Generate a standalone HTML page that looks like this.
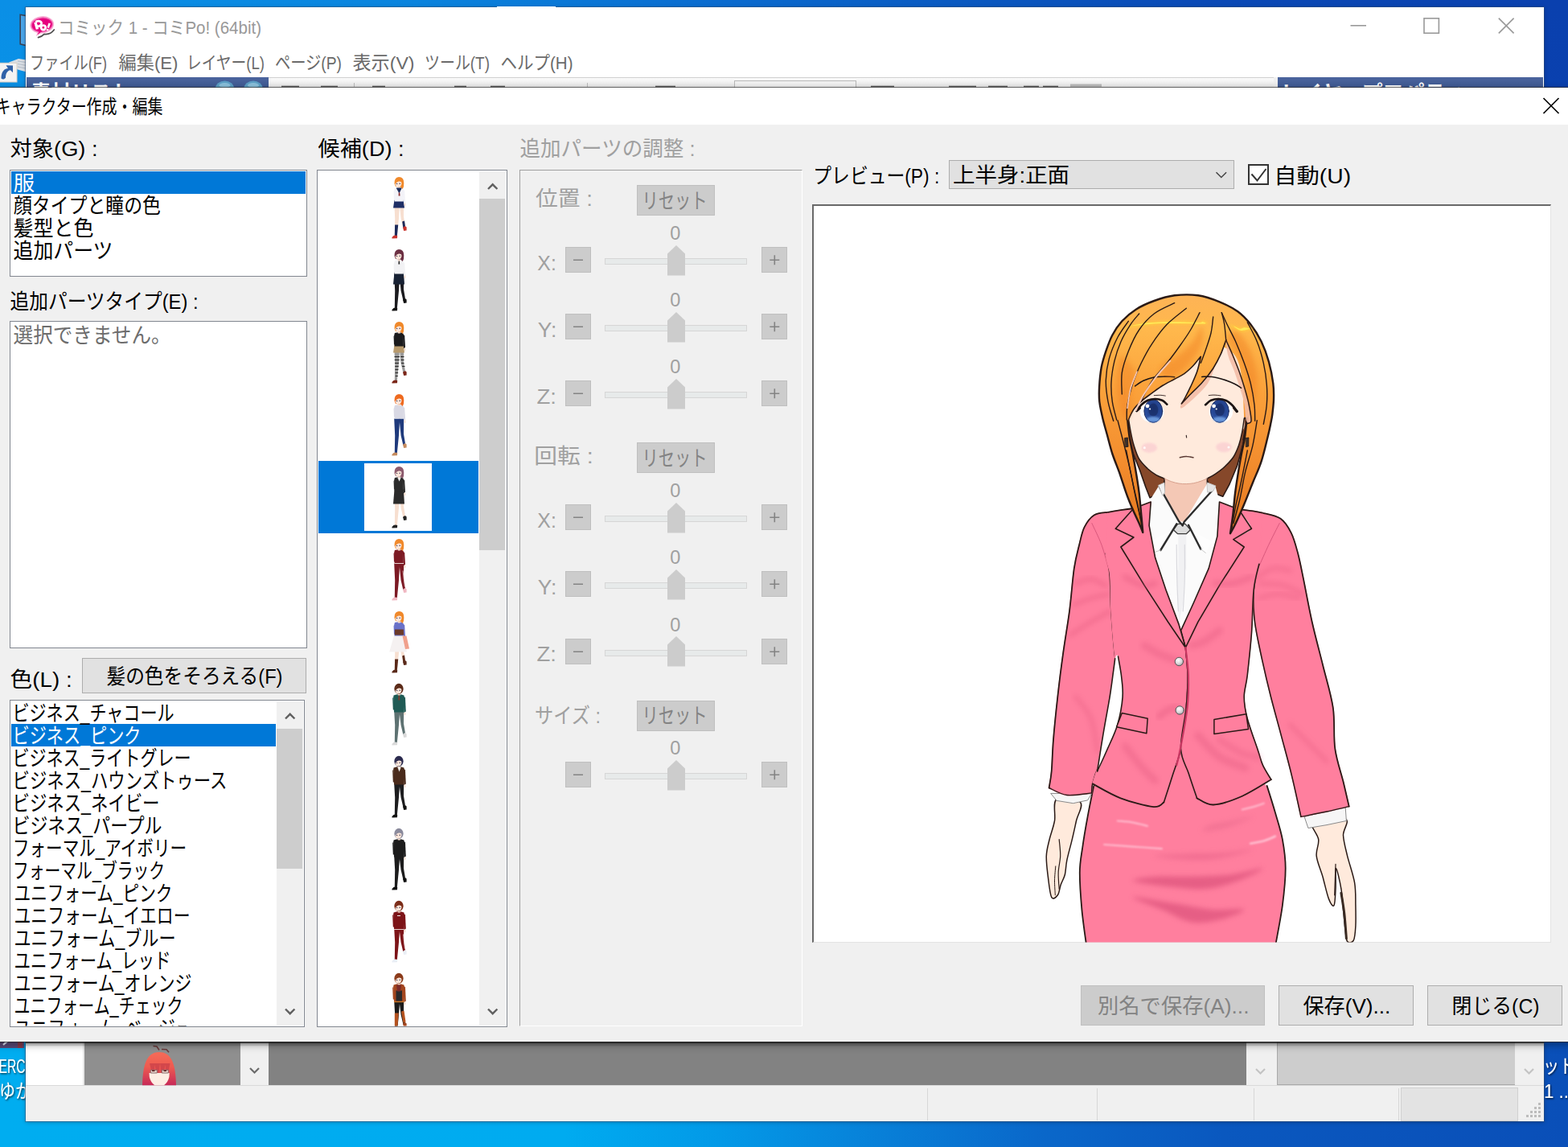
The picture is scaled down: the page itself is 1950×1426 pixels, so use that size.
<!DOCTYPE html>
<html lang="ja">
<head>
<meta charset="utf-8">
<title>コミック 1 - コミPo! (64bit)</title>
<style>
html,body{margin:0;padding:0}
body{width:1950px;height:1426px;overflow:hidden;position:relative;font-family:"Liberation Sans",sans-serif;background:#0a55bd}
.abs{position:absolute}
.tx{left:0;top:0;pointer-events:none}
#desk{left:0;top:0;width:1950px;height:1426px;
 background:
 linear-gradient(90deg,rgba(0,0,0,0) 0,rgba(0,0,0,0) 100%),
 linear-gradient(90deg,#0a92e8 0,#0a84de 26%,#0a6bcf 46%,#0a58c0 62%,#0a49b6 77%,#0a40ae 100%)}
#deskb{left:0;top:1290px;width:1950px;height:136px;background:linear-gradient(90deg,#00adf0 0,#00abf0 36%,#0399e7 46%,#0880d8 56%,#0a68ca 66%,#0a58bf 78%,#0a4fb8 100%)}
#deskl{left:0;top:0;width:34px;height:1426px;background:linear-gradient(180deg,#0a8fe6 0,#0596e8 30%,#00a4ee 70%,#00adf0 100%)}
#deskr{left:1918px;top:0;width:32px;height:1426px;background:linear-gradient(180deg,#0a40ae 0,#0a44b2 50%,#0a4cb6 90%,#0a50b8 100%)}
#main{left:32px;top:9px;width:1888px;height:1385px;background:#fff;box-shadow:0 0 0 1px rgba(50,80,120,.5),0 1px 5px rgba(0,0,0,.3)}
.bluep{background:linear-gradient(180deg,#4b649d 0,#3c5791 100%)}
#dlg{left:-10px;top:109px;width:1975px;height:1186px;background:#f0f0f0;box-shadow:0 0 0 1px rgba(40,40,40,.65),0 3px 10px rgba(0,0,0,.45)}
#dlgt{left:0;top:0;width:1975px;height:46px;background:#fff}
.lb{background:#fff;border:1px solid #828790;box-sizing:border-box}
.sel{background:#0078d7}
.btn{background:#e1e1e1;border:1px solid #adadad;box-sizing:border-box}
.btnd{background:#ccc;border:1px solid #bfbfbf;box-sizing:border-box}
.sb{position:absolute;width:32px;height:32px;background:#ccc;border:1px solid #bfbfbf;box-sizing:border-box}
.trk{position:absolute;left:752px;width:177px;height:8px;background:#e7eaea;border:1px solid #d6d6d6;box-sizing:border-box}
.sbar{background:#f0f0f0}
.thumb{background:#cdcdcd}
svg text{font-family:"Liberation Sans","Noto Sans CJK JP",sans-serif;white-space:pre}
</style>
</head>
<body>
<svg width="0" height="0" style="position:absolute"><defs><filter id="ds" x="-20%" y="-20%" width="150%" height="150%"><feDropShadow dx="1" dy="1.2" stdDeviation=".8" flood-color="#000" flood-opacity=".75"/></filter></defs></svg>
<!-- ===== desktop ===== -->
<div id="desk" class="abs"></div>
<div id="deskl" class="abs"></div>
<div id="deskr" class="abs"></div>
<div id="deskb" class="abs"></div>
<!-- desktop icons peeking at left -->
<svg class="abs" style="left:0;top:0" width="40" height="120" viewBox="0 0 40 120">
 <path d="M25.2 18.200l8 1.500v37l-8-1.800z" fill="#4aa5ea" stroke="#3a4254" stroke-width="1.600"/>
 <path d="M11 77.500l12-4.500 10 1.500v15l-11-3z" fill="#d9dee4"/>
 <path d="M22 76l10 1.500M22 79.500l10 1.800M22 83l10 2" stroke="#b4bcc6" stroke-width="1" fill="none"/>
 <rect x="-1" y="78.300" width="22" height="23.700" fill="#f3f3f3" stroke="#d9cfc4" stroke-width="1"/>
 <path d="M1.500 97.500c0-9 4.500-12.500 8.500-12.500l-2.500-3.800 8.500.2v8.800l-3-3c-3.500.5-6 3.500-6 9.500-2.500 2.500-4 2-5.500.8z" fill="#2f61a8"/>
</svg>
<svg class="abs" style="left:0;top:1295px" width="34" height="9" viewBox="0 12 34 9"><path d="M0 0h30v20H0z" fill="#5b4a78"/><path d="M2 2l9 8-7 6" stroke="#e8eefc" stroke-width="2.200" fill="none"/><path d="M22 0h6v20h-6z" fill="#8a3a4a"/></svg>

<svg class="abs tx" width="1950" height="1426" viewBox="0 0 1950 1426"><g fill="#fff" filter="url(#ds)"><text x="-1.5" y="1333.5" font-size="23" textLength="33" lengthAdjust="spacingAndGlyphs">ERC</text><text x="-1" y="1365" font-size="24" textLength="40" lengthAdjust="spacingAndGlyphs">ゆか</text><text x="1919" y="1333.500" font-size="24" textLength="40" lengthAdjust="spacingAndGlyphs">ット</text><text x="1920" y="1365" font-size="23" textLength="37" lengthAdjust="spacingAndGlyphs">1 ...</text></g></svg>
<!-- ===== main window ===== -->
<div id="main" class="abs">
 <!-- strip visible above dialog : y 96..108 (window coords: -9) -->
 <div class="abs bluep" style="left:1px;top:87px;width:301px;height:16px"></div>
 <div class="abs" style="left:302px;top:87px;width:1250px;height:16px;background:linear-gradient(180deg,#fafafa,#e4e4e4);border-top:1px solid #d0d0d0;border-right:1px solid #b8b8b8"></div>
 <div class="abs" style="left:1552px;top:87px;width:6px;height:16px;background:#f0f0f0"></div>
 <div class="abs bluep" style="left:1557px;top:87px;width:330px;height:16px"></div>
 <div class="abs" style="left:881px;top:91px;width:150px;height:12px;background:#f2f2f2;border:1px solid #b9b9b9;border-bottom:0"></div>
 <!-- below dialog : y 1295..1349 -->
 <div class="abs" style="left:0;top:1286px;width:71px;height:54px;background:#fff"></div>
 <div class="abs" style="left:71px;top:1286px;width:2px;height:54px;background:#e8e8e8"></div>
 <div class="abs" style="left:73px;top:1286px;width:194px;height:54px;background:#8f8f8f"></div>
 <div class="abs sbar" style="left:267px;top:1286px;width:35px;height:54px"></div>
 <div class="abs" style="left:302px;top:1286px;width:1216px;height:54px;background:#828282"></div>
 <div class="abs sbar" style="left:1518px;top:1286px;width:38px;height:54px"></div>
 <div class="abs" style="left:1556px;top:1286px;width:297px;height:54px;background:#cdcdcd;border-left:1px solid #a9a9a9;border-bottom:1px solid #a9a9a9;box-sizing:border-box"></div>
 <div class="abs sbar" style="left:1852px;top:1286px;width:36px;height:54px"></div>
 <!-- status bar -->
 <div class="abs" style="left:0;top:1340px;width:1888px;height:45px;background:#f0f0f0;border-top:1px solid #d9d9d9;box-sizing:border-box"></div>
 <div class="abs" style="left:1121px;top:1344px;width:1px;height:40px;background:#d7d7d7"></div>
 <div class="abs" style="left:1332px;top:1344px;width:1px;height:40px;background:#d7d7d7"></div>
 <div class="abs" style="left:1527px;top:1344px;width:1px;height:40px;background:#d7d7d7"></div>
 <div class="abs" style="left:1707px;top:1344px;width:1px;height:40px;background:#d7d7d7"></div>
 <div class="abs" style="left:1710px;top:1343px;width:146px;height:42px;background:#e3e3e3;border:1px solid #d0d0d0;box-sizing:border-box"></div>
</div>
<!-- main window chrome icons -->
<svg class="abs" style="left:0;top:0" width="1950" height="110" viewBox="0 0 1950 110">
 <g stroke="#999" stroke-width="1.6" fill="none">
  <path d="M1679.5 31.8h19.5"/><rect x="1771" y="22.8" width="18.4" height="18.4"/><path d="M1863.8 22.6l18.8 18.8M1882.6 22.6l-18.8 18.8"/>
 </g>
 <rect x="618" y="8" width="73" height="2" fill="#fff"/>
 <!-- app icon -->
 <g>
  <path d="M47.500 46.600Q52.500 45.300 55 42.400Q62.500 43.400 67.300 37" stroke="#4d4d4d" stroke-width="1.700" fill="none" stroke-linecap="round"/>
  <path d="M48 37l-3.200 8 8.500-5.500z" fill="#f7a8d2"/>
  <ellipse cx="52.200" cy="30.800" rx="15" ry="10.700" fill="#f9b3d8" transform="rotate(-6 52.200 30.800)"/>
  <ellipse cx="52.200" cy="30.800" rx="13.700" ry="9.400" fill="#ef5fae" transform="rotate(-6 52.200 30.800)"/>
  <ellipse cx="52.200" cy="30.900" rx="12.500" ry="8" fill="#e6007e" transform="rotate(-6 52.200 30.900)"/>
  <path d="M49.300 37.500l-2.800 5.800 6-4.600z" fill="#e6007e"/>
  <g fill="none" stroke="#fff" stroke-linejoin="round">
   <path d="M43.900 27.600L46.400 36.400" stroke-width="3.400"/>
   <path d="M44.300 27.400C47.500 25.300 52 26 51.500 29.500C51 32.300 48 32.900 45.600 32.700" stroke-width="2.800"/>
   <circle cx="53.900" cy="34.300" r="2.800" stroke-width="2.700"/>
   <path d="M61.700 28.800L59.700 34.700" stroke-width="2.600"/>
  </g>
  <circle cx="59" cy="37.100" r="1.400" fill="#fff"/>
 </g>
 <!-- toolbar icon tops -->
 <rect x="350" y="106.700" width="22" height="1.500" fill="#2a2a2a" opacity=".75"/><rect x="399" y="106.700" width="21" height="1.500" fill="#2a2a2a" opacity=".75"/><rect x="463" y="106.700" width="16" height="1.500" fill="#2a2a2a" opacity=".75"/><rect x="565" y="106.700" width="15" height="1.500" fill="#2a2a2a" opacity=".75"/><rect x="610" y="106.700" width="18" height="1.500" fill="#2a2a2a" opacity=".75"/><rect x="815" y="106.700" width="25" height="1.500" fill="#2a2a2a" opacity=".75"/><rect x="1083" y="106.700" width="29" height="1.500" fill="#2a2a2a" opacity=".75"/><rect x="1180" y="106.700" width="34" height="1.500" fill="#2a2a2a" opacity=".75"/><rect x="1229" y="106.700" width="24" height="1.500" fill="#2a2a2a" opacity=".75"/><rect x="1273" y="106.700" width="19" height="1.500" fill="#2a2a2a" opacity=".75"/><rect x="1297" y="106.700" width="19" height="1.500" fill="#2a2a2a" opacity=".75"/><rect x="1331" y="104.500" width="39" height="3.500" fill="#bbb"/><rect x="440" y="103" width="1" height="5" fill="#bbb"/><rect x="730" y="103" width="1" height="5" fill="#bbb"/>
 <!-- scroll arrows on blue panel -->
 <g fill="#5c9fc6"><ellipse cx="279.500" cy="109.500" rx="11.500" ry="9"/><ellipse cx="315" cy="109.500" rx="11.500" ry="9"/></g><g fill="#9fd0e6" opacity=".7"><ellipse cx="279.500" cy="106" rx="7" ry="3"/><ellipse cx="315" cy="106" rx="7" ry="3"/></g>
</svg>
<!-- little chevrons under dialog + thumbnail -->
<svg class="abs" style="left:0;top:1290px" width="1950" height="110" viewBox="0 1290 1950 110">
 <g stroke="#6b6b6b" stroke-width="2.2" fill="none"><path d="M311 1328l5.5 5.5 5.5-5.5"/></g>
 <g stroke="#c3c3c3" stroke-width="2.2" fill="none"><path d="M1562 1329l5.5 5.5 5.5-5.5M1896 1329l5.5 5.5 5.5-5.5"/></g>
 <!-- red haired avatar -->
 <defs><linearGradient id="av" x1="0" y1="0" x2="0" y2="1"><stop offset="0" stop-color="#f56c58"/><stop offset=".45" stop-color="#ee5a50"/><stop offset="1" stop-color="#c72a58"/></linearGradient></defs>
 <g>
  <path d="M190.500 1300.500l4.500 .5 3 4.500M201 1304.500l6 .3 3 3.500" stroke="#6a3a3a" stroke-width="1.600" fill="none"/>
  <path d="M177 1349.300C177.500 1327 181 1308 198 1308S218.500 1327 219 1349.300Z" fill="url(#av)"/>
  <path d="M185.500 1334h25.200l-.3 5q-1.500 6.500-6.500 10.300h-11.600q-5-3.800-6.500-10.300z" fill="#fdeee4"/>
  <path d="M186 1322l3 12h2.500l1-10 2 10h3l1.500-12 1.500 12h3l2-10 1 10h2.500l2.500-12z" fill="#c9404a" opacity=".75"/>
  <path d="M187.300 1330.300h8v3.700h-8zM201.300 1330.300h8v3.700h-8z" fill="#e6d4cc" stroke="#8a6a6a" stroke-width="1"/>
  <path d="M189 1331.300h3.500M203.500 1331.300h3.500" stroke="#5a1a1a" stroke-width="1.600"/>
 </g>
 <!-- dialog shadow on panels -->
 <rect x="32" y="1295" width="1888" height="2.200" fill="#222" opacity=".75"/><rect x="32" y="1297.200" width="1888" height="3" fill="#000" opacity=".12"/>
 <!-- size grip -->
 <g fill="#bdbdbd"><rect x="1908" y="1376" width="3" height="3"/><rect x="1913" y="1376" width="3" height="3"/><rect x="1913" y="1371" width="3" height="3"/><rect x="1903" y="1381" width="3" height="3"/><rect x="1908" y="1381" width="3" height="3"/><rect x="1913" y="1381" width="3" height="3"/><rect x="1908" y="1386" width="3" height="3"/><rect x="1913" y="1386" width="3" height="3"/><rect x="1903" y="1386" width="3" height="3"/><rect x="1898" y="1386" width="3" height="3"/></g>
</svg>
<svg class="abs tx" width="1950" height="1426" viewBox="0 0 1950 1426"><text x="72" y="42" font-size="22" fill="#999" textLength="253" lengthAdjust="spacingAndGlyphs">コミック 1 - コミPo! (64bit)</text><g font-size="22.5" fill="#6a6a6a"><text x="37" y="85.500" textLength="96" lengthAdjust="spacingAndGlyphs">ファイル(F)</text><text x="147.500" y="85.500" textLength="74" lengthAdjust="spacingAndGlyphs">編集(E)</text><text x="232" y="85.500" textLength="97" lengthAdjust="spacingAndGlyphs">レイヤー(L)</text><text x="342" y="85.500" textLength="83" lengthAdjust="spacingAndGlyphs">ページ(P)</text><text x="438.500" y="85.500" textLength="77" lengthAdjust="spacingAndGlyphs">表示(V)</text><text x="528" y="85.500" textLength="81" lengthAdjust="spacingAndGlyphs">ツール(T)</text><text x="622.500" y="85.500" textLength="90" lengthAdjust="spacingAndGlyphs">ヘルプ(H)</text></g><g font-size="26" font-weight="bold" fill="#fff"><text x="38.500" y="124.500" textLength="124" lengthAdjust="spacingAndGlyphs">素材リスト</text><text x="1592.500" y="124.500" textLength="229" lengthAdjust="spacingAndGlyphs">レイヤープロパティ</text></g></svg>

<!-- ===== dialog ===== -->
<div id="dlg" class="abs"><div id="dlgt" class="abs"></div></div>
<!-- list 1 -->
<div class="abs lb" style="left:12px;top:211px;width:370px;height:133px"></div>
<div class="abs sel" style="left:14px;top:213px;width:366px;height:28px"></div>
<!-- list 2 -->
<div class="abs lb" style="left:12px;top:399px;width:370px;height:407px"></div>
<!-- colour button -->
<div class="abs btn" style="left:102px;top:818px;width:279px;height:44px"></div>
<!-- list 3 -->
<div class="abs lb" style="left:12px;top:870px;width:367px;height:407px"></div>
<div class="abs sel" style="left:14px;top:900px;width:329px;height:28px"></div>
<div class="abs sbar" style="left:344px;top:872px;width:33px;height:403px"></div>
<div class="abs thumb" style="left:344px;top:906px;width:32px;height:174px"></div>
<!-- candidate list -->
<div class="abs lb" style="left:394px;top:211px;width:237px;height:1066px"></div>
<div class="abs sel" style="left:396px;top:573px;width:199px;height:90px"></div>
<div class="abs" style="left:453px;top:576px;width:84px;height:84px;background:#fff"></div>
<div class="abs sbar" style="left:596px;top:213px;width:33px;height:1062px"></div>
<div class="abs thumb" style="left:596px;top:247px;width:32px;height:437px"></div>
<!-- adjust group box -->
<div class="abs" style="left:646px;top:211px;width:352px;height:1065px;border-left:1px solid #a0a0a0;border-top:1px solid #a0a0a0;border-right:1px solid #fff;border-bottom:1px solid #fff;box-sizing:border-box"></div>
<div class="abs btnd" style="left:792px;top:230px;width:97px;height:38px"></div>
<div class="abs btnd" style="left:792px;top:550px;width:97px;height:38px"></div>
<div class="abs btnd" style="left:792px;top:871px;width:97px;height:38px"></div>
<div class="sb" style="left:703px;top:307.2px"></div><div class="sb" style="left:947px;top:307.2px"></div>
<div class="trk" style="top:321.0px"></div>
<svg class="abs" style="left:829px;top:303.7px" width="24" height="40"><path d="M1 38.5V11.5L12 1l11 10.5v27z" fill="#ccc"/></svg>
<svg class="abs" style="left:703px;top:307.2px" width="280" height="32" stroke="#838383" stroke-width="1.6" fill="none"><path d="M10 16.3h12M254.3 16.3h12M260.3 10.3v12"/></svg><div class="sb" style="left:703px;top:390.4px"></div><div class="sb" style="left:947px;top:390.4px"></div>
<div class="trk" style="top:404.2px"></div>
<svg class="abs" style="left:829px;top:386.9px" width="24" height="40"><path d="M1 38.5V11.5L12 1l11 10.5v27z" fill="#ccc"/></svg>
<svg class="abs" style="left:703px;top:390.4px" width="280" height="32" stroke="#838383" stroke-width="1.6" fill="none"><path d="M10 16.3h12M254.3 16.3h12M260.3 10.3v12"/></svg><div class="sb" style="left:703px;top:473.4px"></div><div class="sb" style="left:947px;top:473.4px"></div>
<div class="trk" style="top:487.2px"></div>
<svg class="abs" style="left:829px;top:469.9px" width="24" height="40"><path d="M1 38.5V11.5L12 1l11 10.5v27z" fill="#ccc"/></svg>
<svg class="abs" style="left:703px;top:473.4px" width="280" height="32" stroke="#838383" stroke-width="1.6" fill="none"><path d="M10 16.3h12M254.3 16.3h12M260.3 10.3v12"/></svg><div class="sb" style="left:703px;top:627.2px"></div><div class="sb" style="left:947px;top:627.2px"></div>
<div class="trk" style="top:641.0px"></div>
<svg class="abs" style="left:829px;top:623.7px" width="24" height="40"><path d="M1 38.5V11.5L12 1l11 10.5v27z" fill="#ccc"/></svg>
<svg class="abs" style="left:703px;top:627.2px" width="280" height="32" stroke="#838383" stroke-width="1.6" fill="none"><path d="M10 16.3h12M254.3 16.3h12M260.3 10.3v12"/></svg><div class="sb" style="left:703px;top:710.4px"></div><div class="sb" style="left:947px;top:710.4px"></div>
<div class="trk" style="top:724.2px"></div>
<svg class="abs" style="left:829px;top:706.9px" width="24" height="40"><path d="M1 38.5V11.5L12 1l11 10.5v27z" fill="#ccc"/></svg>
<svg class="abs" style="left:703px;top:710.4px" width="280" height="32" stroke="#838383" stroke-width="1.6" fill="none"><path d="M10 16.3h12M254.3 16.3h12M260.3 10.3v12"/></svg><div class="sb" style="left:703px;top:793.8px"></div><div class="sb" style="left:947px;top:793.8px"></div>
<div class="trk" style="top:807.6px"></div>
<svg class="abs" style="left:829px;top:790.3px" width="24" height="40"><path d="M1 38.5V11.5L12 1l11 10.5v27z" fill="#ccc"/></svg>
<svg class="abs" style="left:703px;top:793.8px" width="280" height="32" stroke="#838383" stroke-width="1.6" fill="none"><path d="M10 16.3h12M254.3 16.3h12M260.3 10.3v12"/></svg><div class="sb" style="left:703px;top:947.2px"></div><div class="sb" style="left:947px;top:947.2px"></div>
<div class="trk" style="top:961.0px"></div>
<svg class="abs" style="left:829px;top:943.7px" width="24" height="40"><path d="M1 38.5V11.5L12 1l11 10.5v27z" fill="#ccc"/></svg>
<svg class="abs" style="left:703px;top:947.2px" width="280" height="32" stroke="#838383" stroke-width="1.6" fill="none"><path d="M10 16.3h12M254.3 16.3h12M260.3 10.3v12"/></svg>
<!-- preview header -->
<div class="abs btn" style="left:1180px;top:199px;width:355px;height:36px"></div>
<div class="abs" style="left:1552px;top:204px;width:26px;height:26px;background:#fff;border:2px solid #333;box-sizing:border-box"></div>
<!-- preview pane -->
<div class="abs" style="left:1010px;top:254px;width:1919px;height:1px"></div>
<div class="abs" style="left:1010px;top:254px;width:919px;height:918px;background:#fff;border-left:2px solid #696969;border-top:2px solid #696969;border-right:1px solid #e3e3e3;border-bottom:1px solid #e3e3e3;box-sizing:border-box"></div>
<!-- bottom buttons -->
<div class="abs btnd" style="left:1344px;top:1225px;width:229px;height:50px"></div>
<div class="abs btn" style="left:1590px;top:1225px;width:168px;height:50px"></div>
<div class="abs btn" style="left:1775px;top:1225px;width:168px;height:50px"></div>
<!-- dialog icons -->
<svg class="abs tx" width="1950" height="1426" viewBox="0 0 1950 1426">
 <path d="M1919.5 122l19 19M1938.5 122l-19 19" stroke="#000" stroke-width="1.7" fill="none"/>
 <path d="M1512.5 214.2l6.3 6.3 6.3-6.3" stroke="#444" stroke-width="1.5" fill="none"/>
 <path d="M1556.5 216.5l7 8 11-14.5" stroke="#333" stroke-width="2" fill="none"/>
 <g stroke="#606060" stroke-width="2.4" fill="none">
  <path d="M355 893.5l5.7-5.7 5.7 5.700M355 1254.500l5.7 5.700 5.700-5.700"/>
  <path d="M607 235l5.700-5.700 5.700 5.700M607 1254.500l5.700 5.700 5.700-5.700"/>
 </g>
</svg>
<svg class="abs tx" width="1950" height="1426" viewBox="0 0 1950 1426"><defs><filter id="tb"><feGaussianBlur stdDeviation=".7"/></filter><clipPath id="cth"><rect x="396" y="213" width="200" height="1062.5"/></clipPath></defs><g clip-path="url(#cth)"><g transform="translate(496.0,219.5)"><path d="M0.500 31 L6.200 31 L6 50 L8 62 L5.400 64 L2.600 52Z" fill="#f7dfd0"/><path d="M-5.800 31 L1.200 31 L0 52 L-2.200 74 L-5.200 74 L-4.800 52Z" fill="#f7dfd0"/><path d="M-4.900 60L-0.800 60L-2.200 74L-5.200 74Z" fill="#1c2a5a"/><path d="M4.200 56L7 55L8 62L5.400 64Z" fill="#1c2a5a"/><path d="M-8.500 75.500Q-6 72 -1.800 73.500L-2 76.800L-8.500 77Z" fill="#c9342e"/><path d="M5 63.500Q7.500 60.500 9.600 63L9.600 67L6.200 67.500Z" fill="#c9342e"/><path d="M-5.500 29L5.800 29L7 39L-7.0 39Z" fill="#1f2f66"/><path d="M-5.200 14.500Q0 12.800 5.200 14.500L5.900 31L-5.400 31Z" fill="#f3f3f8"/><path d="M4.800 15L7.200 18L8 32L6.200 34L5.400 26Z" fill="#f3f3f8"/><path d="M-5.200 15L-6.400 19L-6 29L-4.800 29Z" fill="#f3f3f8"/><path d="M6.300 34L8.100 32.3L8.500 36L7 36.8Z" fill="#f7dfd0"/><path d="M-1.200 11.500L1.800 11.500L1.800 15L-1.200 15Z" fill="#f7dfd0"/><path d="M-5.400 9Q-6 1 0 0.400Q6.500 0.600 6.300 8Q6.500 13 4.800 15.500L2 13L-4 12.500Z" fill="#f0892b"/><ellipse cx="-0.600" cy="8.400" rx="4" ry="4.700" fill="#fbe6da"/><path d="M-5.200 7.500Q-3.500 2.500 1 3Q5 3.600 5.200 8.500Q3 5.500 0 6Q-3.200 6.600 -4.400 10Z" fill="#f0892b"/><circle cx="1.200" cy="8.800" r="0.750" fill="#3a3550"/><circle cx="-2.400" cy="9" r="0.700" fill="#3a3550"/><path d="M-3.400 14L3.800 14L0.500 21Z" fill="#1d2d5c"/><path d="M-.2 20l1.400 0l.4 4l-2 0z" fill="#8a2a2a"/></g><g transform="translate(496.0,309.5)"><path d="M0.500 31 L6.200 31 L6 50 L8 62 L5.400 64 L2.600 52Z" fill="#1b1b1f"/><path d="M-5.800 31 L1.200 31 L0 52 L-2.200 74 L-5.200 74 L-4.800 52Z" fill="#1b1b1f"/><path d="M-8.500 75.500Q-6 72 -1.800 73.500L-2 76.800L-8.500 77Z" fill="#111"/><path d="M5 63.500Q7.500 60.500 9.600 63L9.600 67L6.200 67.500Z" fill="#111"/><path d="M-5.500 29L5.800 29L7 44L-7.0 44Z" fill="#182234"/><path d="M-5.200 14.500Q0 12.800 5.200 14.500L5.900 31L-5.400 31Z" fill="#f2f2f4"/><path d="M4.800 15L7.200 18L8 32L6.200 34L5.400 26Z" fill="#f2f2f4"/><path d="M-5.200 15L-6.400 19L-6 29L-4.800 29Z" fill="#f2f2f4"/><path d="M6.300 34L8.100 32.3L8.500 36L7 36.8Z" fill="#f7dfd0"/><path d="M-1.200 11.500L1.800 11.500L1.800 15L-1.200 15Z" fill="#f7dfd0"/><path d="M-5.400 9Q-6 1 0 0.400Q6.500 0.600 6.300 8Q6.500 13 4.800 15.500L2 13L-4 12.500Z" fill="#6b2f42"/><ellipse cx="-0.600" cy="8.400" rx="4" ry="4.700" fill="#fbe6da"/><path d="M-5.200 7.500Q-3.500 2.500 1 3Q5 3.600 5.200 8.500Q3 5.500 0 6Q-3.200 6.600 -4.400 10Z" fill="#6b2f42"/><circle cx="1.200" cy="8.800" r="0.750" fill="#3a3550"/><circle cx="-2.400" cy="9" r="0.700" fill="#3a3550"/><path d="M-.3 15l1.200 0l.3 4l-1.800 0z" fill="#222"/></g><g transform="translate(496.0,399.5)"><path d="M0.500 31 L6.200 31 L6 50 L8 62 L5.400 64 L2.600 52Z" fill="#9a9a9a"/><path d="M-5.800 31 L1.200 31 L0 52 L-2.200 74 L-5.200 74 L-4.800 52Z" fill="#9a9a9a"/><path d="M-8.500 75.500Q-6 72 -1.800 73.500L-2 76.800L-8.500 77Z" fill="#7b2618"/><path d="M5 63.500Q7.500 60.500 9.600 63L9.600 67L6.200 67.500Z" fill="#7b2618"/><path d="M-5.500 29L5.800 29L7 39L-7.0 39Z" fill="#b89a6c"/><path d="M-5.200 14.500Q0 12.800 5.200 14.500L5.900 31L-5.400 31Z" fill="#1b1b1d"/><path d="M4.800 15L7.200 18L8 32L6.200 34L5.400 26Z" fill="#1b1b1d"/><path d="M-5.200 15L-6.400 19L-6 29L-4.800 29Z" fill="#1b1b1d"/><path d="M6.300 34L8.100 32.3L8.500 36L7 36.8Z" fill="#f7dfd0"/><path d="M-1.200 11.500L1.800 11.500L1.800 15L-1.200 15Z" fill="#f7dfd0"/><path d="M-5.400 9Q-6 1 0 0.400Q6.500 0.600 6.300 8Q6.500 13 4.800 15.500L2 13L-4 12.500Z" fill="#f0892b"/><ellipse cx="-0.600" cy="8.400" rx="4" ry="4.700" fill="#fbe6da"/><path d="M-5.200 7.500Q-3.500 2.500 1 3Q5 3.600 5.200 8.500Q3 5.500 0 6Q-3.200 6.600 -4.400 10Z" fill="#f0892b"/><circle cx="1.200" cy="8.800" r="0.750" fill="#3a3550"/><circle cx="-2.400" cy="9" r="0.700" fill="#3a3550"/><g stroke="#222" stroke-width="1.100"><path d="M-5.500 44h6.500M-5.300 48h6M-5 52h5M-4.800 56h4.500M-4.600 60h4M-4.400 64h3.500M-4.200 68h3M2 44h4.500M2.500 48h4M3 52h3.500M4 56h3.500"/></g></g><g transform="translate(496.0,489.5)"><path d="M0.500 31 L6.200 31 L6 50 L8 62 L5.400 64 L2.600 52Z" fill="#1f3a7c"/><path d="M-5.800 31 L1.200 31 L0 52 L-2.200 74 L-5.200 74 L-4.800 52Z" fill="#1f3a7c"/><path d="M-8.500 75.500Q-6 72 -1.800 73.500L-2 76.800L-8.500 77Z" fill="#c58b5e"/><path d="M5 63.500Q7.500 60.500 9.600 63L9.600 67L6.200 67.500Z" fill="#c58b5e"/><path d="M-5.200 14.500Q0 12.800 5.200 14.500L5.900 31L-5.400 31Z" fill="#d9d9e4"/><path d="M4.800 15L7.200 18L8 32L6.200 34L5.400 26Z" fill="#d9d9e4"/><path d="M-5.200 15L-6.400 19L-6 29L-4.800 29Z" fill="#d9d9e4"/><path d="M6.300 34L8.100 32.3L8.500 36L7 36.8Z" fill="#f7dfd0"/><path d="M-1.200 11.500L1.800 11.500L1.800 15L-1.200 15Z" fill="#f7dfd0"/><path d="M-5.400 9Q-6 1 0 0.400Q6.500 0.600 6.300 8Q6.500 13 4.800 15.500L2 13L-4 12.500Z" fill="#ee6a1f"/><ellipse cx="-0.600" cy="8.400" rx="4" ry="4.700" fill="#fbe6da"/><path d="M-5.200 7.500Q-3.500 2.500 1 3Q5 3.600 5.200 8.500Q3 5.500 0 6Q-3.200 6.600 -4.400 10Z" fill="#ee6a1f"/><circle cx="1.200" cy="8.800" r="0.750" fill="#3a3550"/><circle cx="-2.400" cy="9" r="0.700" fill="#3a3550"/></g><g transform="translate(496.0,579.5)"><path d="M0.500 31 L6.200 31 L6 50 L8 62 L5.400 64 L2.600 52Z" fill="#f7dfd0"/><path d="M-5.800 31 L1.200 31 L0 52 L-2.200 74 L-5.200 74 L-4.800 52Z" fill="#f7dfd0"/><path d="M-8.500 75.500Q-6 72 -1.800 73.500L-2 76.800L-8.500 77Z" fill="#222"/><path d="M5 63.500Q7.500 60.500 9.600 63L9.600 67L6.200 67.500Z" fill="#222"/><path d="M-5.500 29L5.800 29L7 47L-7.0 47Z" fill="#2b2b2b"/><path d="M-5.200 14.500Q0 12.800 5.200 14.500L5.900 31L-5.400 31Z" fill="#2b2b2b"/><path d="M4.800 15L7.200 18L8 32L6.200 34L5.400 26Z" fill="#2b2b2b"/><path d="M-5.200 15L-6.400 19L-6 29L-4.800 29Z" fill="#2b2b2b"/><path d="M6.300 34L8.100 32.3L8.500 36L7 36.8Z" fill="#f7dfd0"/><path d="M-1.200 11.500L1.800 11.500L1.800 15L-1.200 15Z" fill="#f7dfd0"/><path d="M-5.400 9Q-6 1 0 0.400Q6.500 0.600 6.300 8Q6.500 13 4.800 15.500L2 13L-4 12.500Z" fill="#8d5b6e"/><ellipse cx="-0.600" cy="8.400" rx="4" ry="4.700" fill="#fbe6da"/><path d="M-5.200 7.500Q-3.500 2.500 1 3Q5 3.600 5.200 8.500Q3 5.500 0 6Q-3.200 6.600 -4.400 10Z" fill="#8d5b6e"/><circle cx="1.200" cy="8.800" r="0.750" fill="#3a3550"/><circle cx="-2.400" cy="9" r="0.700" fill="#3a3550"/><path d="M-1.600 14.500L.6 19L2.600 14.500Z" fill="#eee"/></g><g transform="translate(496.0,669.5)"><path d="M0.500 31 L6.200 31 L6 50 L8 62 L5.400 64 L2.600 52Z" fill="#7c1a24"/><path d="M-5.800 31 L1.200 31 L0 52 L-2.200 74 L-5.200 74 L-4.800 52Z" fill="#7c1a24"/><path d="M-8.500 75.500Q-6 72 -1.800 73.500L-2 76.800L-8.500 77Z" fill="#f0b8c2"/><path d="M5 63.500Q7.500 60.500 9.600 63L9.600 67L6.200 67.500Z" fill="#f0b8c2"/><path d="M-5.200 14.500Q0 12.800 5.200 14.500L5.900 31L-5.400 31Z" fill="#7c1a24"/><path d="M4.800 15L7.200 18L8 32L6.200 34L5.400 26Z" fill="#7c1a24"/><path d="M-5.200 15L-6.400 19L-6 29L-4.800 29Z" fill="#7c1a24"/><path d="M6.300 34L8.100 32.3L8.500 36L7 36.8Z" fill="#f7dfd0"/><path d="M-1.200 11.500L1.800 11.500L1.800 15L-1.200 15Z" fill="#f7dfd0"/><path d="M-5.400 9Q-6 1 0 0.400Q6.500 0.600 6.300 8Q6.500 13 4.800 15.500L2 13L-4 12.500Z" fill="#f0892b"/><ellipse cx="-0.600" cy="8.400" rx="4" ry="4.700" fill="#fbe6da"/><path d="M-5.200 7.500Q-3.500 2.500 1 3Q5 3.600 5.200 8.500Q3 5.500 0 6Q-3.200 6.600 -4.400 10Z" fill="#f0892b"/><circle cx="1.200" cy="8.800" r="0.750" fill="#3a3550"/><circle cx="-2.400" cy="9" r="0.700" fill="#3a3550"/><path d="M-5.400 31h11.500" stroke="#e8d0d0" stroke-width="1"/><path d="M5 40l2.500 20" stroke="#e8d0d0" stroke-width=".8"/></g><g transform="translate(496.0,759.5)"><path d="M0.500 31 L6.200 31 L6 50 L8 62 L5.400 64 L2.600 52Z" fill="#f7dfd0"/><path d="M-5.800 31 L1.200 31 L0 52 L-2.200 74 L-5.200 74 L-4.800 52Z" fill="#f7dfd0"/><path d="M-8.500 75.500Q-6 72 -1.800 73.500L-2 76.800L-8.500 77Z" fill="#5a2a1a"/><path d="M5 63.500Q7.500 60.500 9.600 63L9.600 67L6.200 67.500Z" fill="#5a2a1a"/><path d="M-5.500 29L5.800 29L10 51L-11.8 51Z" fill="#f5f1f1"/><path d="M-5.200 14.500Q0 12.800 5.200 14.500L5.900 31L-5.400 31Z" fill="#6a72c9"/><path d="M4.800 15L7.200 18L8 32L6.200 34L5.400 26Z" fill="#6a72c9"/><path d="M-5.200 15L-6.400 19L-6 29L-4.800 29Z" fill="#6a72c9"/><path d="M6.300 34L8.100 32.3L8.500 36L7 36.800Z" fill="#f7dfd0"/><path d="M-1.200 11.500L1.800 11.500L1.800 15L-1.200 15Z" fill="#f7dfd0"/><path d="M-5.400 9Q-6 1 0 0.400Q6.500 0.600 6.300 8Q6.500 13 4.800 15.500L2 13L-4 12.500Z" fill="#f0892b"/><ellipse cx="-0.600" cy="8.400" rx="4" ry="4.700" fill="#fbe6da"/><path d="M-5.200 7.500Q-3.500 2.500 1 3Q5 3.600 5.200 8.500Q3 5.500 0 6Q-3.200 6.600 -4.400 10Z" fill="#f0892b"/><circle cx="1.200" cy="8.800" r="0.750" fill="#3a3550"/><circle cx="-2.400" cy="9" r="0.700" fill="#3a3550"/><path d="M-5 23h10.800l.3 7h-11.300z" fill="#6b3a2a"/><path d="M4.500 31l5 0l3.500 16l-5 .5z" fill="#f0a08c"/><path d="M-4.900 60L-0.800 60L-2.200 74L-5.200 74Z" fill="#5a2a1a"/><path d="M4.200 56L7 55L8 62L5.400 64Z" fill="#5a2a1a"/></g><g transform="translate(496.0,849.5)"><path d="M0.500 35 L6.200 35 L6 50 L8 62 L5.400 64 L2.600 52Z" fill="#5e7272"/><path d="M-5.800 35 L1.200 35 L0 52 L-2.200 74 L-5.200 74 L-4.800 52Z" fill="#5e7272"/><path d="M-8.500 75.500Q-6 72 -1.800 73.500L-2 76.800L-8.500 77Z" fill="#d9d9d9"/><path d="M5 63.500Q7.500 60.500 9.600 63L9.600 67L6.200 67.500Z" fill="#d9d9d9"/><path d="M-6.500 15Q0 12.500 6.500 15L6.600 36L-6 36Z" fill="#1f5b55"/><path d="M5.600 15.500L8 18L8.800 35L6.600 37L5.800 26Z" fill="#1f5b55"/><path d="M-6.400 15.500L-7.800 19L-7.200 33L-5.600 33Z" fill="#1f5b55"/><path d="M6.300 37L8.100 35.3L8.500 39L7 39.800Z" fill="#f7dfd0"/><path d="M-1.200 11.500L1.800 11.500L1.800 15L-1.200 15Z" fill="#f7dfd0"/><ellipse cx="0" cy="6.800" rx="5.600" ry="6.600" fill="#5b2a18"/><ellipse cx="-0.600" cy="8.400" rx="4" ry="4.700" fill="#fbe6da"/><path d="M-5.200 7.500Q-3.500 2.500 1 3Q5 3.600 5.200 8.500Q3 5.500 0 6Q-3.200 6.600 -4.400 10Z" fill="#5b2a18"/><circle cx="1.200" cy="8.800" r="0.750" fill="#3a3550"/><circle cx="-2.400" cy="9" r="0.700" fill="#3a3550"/><path d="M-.300 15l1.200 0l.3 6l-1.800 0z" fill="#8a3a2a"/></g><g transform="translate(496.0,939.5)"><path d="M0.500 35 L6.200 35 L6 50 L8 62 L5.400 64 L2.600 52Z" fill="#1d1d1f"/><path d="M-5.800 35 L1.200 35 L0 52 L-2.200 74 L-5.200 74 L-4.800 52Z" fill="#1d1d1f"/><path d="M-8.500 75.500Q-6 72 -1.800 73.500L-2 76.800L-8.500 77Z" fill="#111"/><path d="M5 63.500Q7.500 60.500 9.600 63L9.600 67L6.200 67.500Z" fill="#111"/><path d="M-6.500 15Q0 12.500 6.500 15L6.600 36L-6 36Z" fill="#4a2b1c"/><path d="M5.600 15.500L8 18L8.800 35L6.600 37L5.800 26Z" fill="#4a2b1c"/><path d="M-6.400 15.500L-7.800 19L-7.200 33L-5.600 33Z" fill="#4a2b1c"/><path d="M6.300 37L8.100 35.3L8.500 39L7 39.800Z" fill="#f7dfd0"/><path d="M-1.200 11.500L1.800 11.500L1.800 15L-1.200 15Z" fill="#f7dfd0"/><ellipse cx="0" cy="6.800" rx="5.600" ry="6.600" fill="#2b2a4e"/><ellipse cx="-0.600" cy="8.400" rx="4" ry="4.700" fill="#fbe6da"/><path d="M-5.200 7.500Q-3.500 2.500 1 3Q5 3.600 5.200 8.500Q3 5.500 0 6Q-3.200 6.600 -4.400 10Z" fill="#2b2a4e"/><circle cx="1.200" cy="8.800" r="0.750" fill="#3a3550"/><circle cx="-2.400" cy="9" r="0.700" fill="#3a3550"/><path d="M-1.600 14.500L.6 20L2.600 14.500Z" fill="#eee"/></g><g filter="url(#tb)"><g transform="translate(496.0,1029.5)"><path d="M0.500 35 L6.200 35 L6 50 L8 62 L5.400 64 L2.600 52Z" fill="#1b1b1c"/><path d="M-5.800 35 L1.200 35 L0 52 L-2.200 74 L-5.200 74 L-4.800 52Z" fill="#1b1b1c"/><path d="M-8.500 75.500Q-6 72 -1.800 73.500L-2 76.800L-8.500 77Z" fill="#111"/><path d="M5 63.500Q7.500 60.500 9.600 63L9.600 67L6.200 67.500Z" fill="#111"/><path d="M-6.500 15Q0 12.500 6.500 15L6.600 36L-6 36Z" fill="#1b1b1c"/><path d="M5.600 15.500L8 18L8.800 35L6.600 37L5.800 26Z" fill="#1b1b1c"/><path d="M-6.400 15.500L-7.800 19L-7.200 33L-5.600 33Z" fill="#1b1b1c"/><path d="M6.300 37L8.100 35.3L8.500 39L7 39.800Z" fill="#f7dfd0"/><path d="M-1.200 11.500L1.800 11.500L1.800 15L-1.200 15Z" fill="#f7dfd0"/><ellipse cx="0" cy="6.800" rx="5.600" ry="6.600" fill="#8a8a9c"/><ellipse cx="-0.600" cy="8.400" rx="4" ry="4.700" fill="#fbe6da"/><path d="M-5.200 7.500Q-3.500 2.500 1 3Q5 3.600 5.200 8.500Q3 5.500 0 6Q-3.200 6.600 -4.400 10Z" fill="#8a8a9c"/><circle cx="1.200" cy="8.800" r="0.750" fill="#3a3550"/><circle cx="-2.400" cy="9" r="0.700" fill="#3a3550"/></g></g><g transform="translate(496.0,1119.5)"><path d="M0.500 35 L6.200 35 L6 50 L8 62 L5.400 64 L2.600 52Z" fill="#7d1418"/><path d="M-5.800 35 L1.200 35 L0 52 L-2.200 74 L-5.200 74 L-4.800 52Z" fill="#7d1418"/><path d="M-8.500 75.500Q-6 72 -1.800 73.500L-2 76.800L-8.500 77Z" fill="#e9eef5"/><path d="M5 63.500Q7.500 60.500 9.600 63L9.600 67L6.200 67.500Z" fill="#e9eef5"/><path d="M-6.500 15Q0 12.500 6.500 15L6.600 36L-6 36Z" fill="#7d1418"/><path d="M5.600 15.500L8 18L8.800 35L6.600 37L5.800 26Z" fill="#7d1418"/><path d="M-6.400 15.500L-7.800 19L-7.200 33L-5.600 33Z" fill="#7d1418"/><path d="M6.300 37L8.100 35.3L8.500 39L7 39.800Z" fill="#f7dfd0"/><path d="M-1.200 11.500L1.800 11.500L1.800 15L-1.200 15Z" fill="#f7dfd0"/><ellipse cx="0" cy="6.800" rx="5.600" ry="6.600" fill="#7b2c18"/><ellipse cx="-0.600" cy="8.400" rx="4" ry="4.700" fill="#fbe6da"/><path d="M-5.200 7.500Q-3.500 2.500 1 3Q5 3.600 5.200 8.500Q3 5.500 0 6Q-3.200 6.600 -4.400 10Z" fill="#7b2c18"/><circle cx="1.200" cy="8.800" r="0.750" fill="#3a3550"/><circle cx="-2.400" cy="9" r="0.700" fill="#3a3550"/><path d="M-6 36h12.500" stroke="#e8d0d0" stroke-width="1"/><path d="M-2 19h4" stroke="#eee" stroke-width="1"/><path d="M5.500 42l2 18" stroke="#e8d0d0" stroke-width=".8"/></g><g transform="translate(496.0,1209.5)"><path d="M0.500 35 L6.200 35 L6 50 L8 62 L5.400 64 L2.600 52Z" fill="#1b1b1b"/><path d="M-5.800 35 L1.200 35 L0 52 L-2.200 74 L-5.200 74 L-4.800 52Z" fill="#1b1b1b"/><path d="M-8.500 75.500Q-6 72 -1.800 73.500L-2 76.800L-8.500 77Z" fill="#a3461f"/><path d="M5 63.500Q7.500 60.500 9.600 63L9.600 67L6.200 67.500Z" fill="#a3461f"/><path d="M-6.500 15Q0 12.500 6.500 15L6.600 36L-6 36Z" fill="#a3461f"/><path d="M5.600 15.500L8 18L8.800 35L6.600 37L5.800 26Z" fill="#a3461f"/><path d="M-6.400 15.500L-7.800 19L-7.200 33L-5.600 33Z" fill="#a3461f"/><path d="M6.300 37L8.100 35.3L8.500 39L7 39.800Z" fill="#f7dfd0"/><path d="M-1.200 11.500L1.800 11.500L1.800 15L-1.200 15Z" fill="#f7dfd0"/><ellipse cx="0" cy="6.800" rx="5.600" ry="6.600" fill="#8b3b1a"/><ellipse cx="-0.600" cy="8.400" rx="4" ry="4.700" fill="#fbe6da"/><path d="M-5.200 7.500Q-3.500 2.500 1 3Q5 3.600 5.200 8.500Q3 5.500 0 6Q-3.200 6.600 -4.400 10Z" fill="#8b3b1a"/><circle cx="1.200" cy="8.800" r="0.750" fill="#3a3550"/><circle cx="-2.400" cy="9" r="0.700" fill="#3a3550"/><path d="M-6 36h12.500" stroke="#c8792a" stroke-width="1.400"/><path d="M-3.500 22l7.500 0l0 13l-7.500 0z" fill="#2a2a2c"/><path d="M-5.200 50l5 0l-1.800 22l-3.200 0z" fill="#b5521f"/><path d="M3 48l3.500-1l2 14l-3 1.500z" fill="#b5521f"/><path d="M-3 15l6 0l-1 8l-4 0z" fill="#7a2a2a"/></g></g></svg>
<svg class="abs tx" width="1950" height="1426" viewBox="0 0 1950 1426"><defs>
<linearGradient id="hg" gradientUnits="userSpaceOnUse" x1="1476" y1="366" x2="1476" y2="662"><stop offset="0" stop-color="#fdb356"/><stop offset=".15" stop-color="#ffb84c"/><stop offset=".4" stop-color="#fba23b"/><stop offset=".7" stop-color="#f38d2e"/><stop offset="1" stop-color="#e4771f"/></linearGradient>
<radialGradient id="eg" cx=".5" cy=".35" r=".75"><stop offset="0" stop-color="#1f3a80"/><stop offset=".6" stop-color="#284a98"/><stop offset="1" stop-color="#3a68bd"/></radialGradient>
<radialGradient id="bt" cx=".4" cy=".35" r=".7"><stop offset="0" stop-color="#fff"/><stop offset=".6" stop-color="#d8d4d8"/><stop offset="1" stop-color="#9a969c"/></radialGradient>
<filter id="b1" x="-20%" y="-50%" width="140%" height="200%"><feGaussianBlur stdDeviation="1"/></filter>
<filter id="b3" x="-20%" y="-50%" width="140%" height="200%"><feGaussianBlur stdDeviation="3"/></filter>
<clipPath id="pv"><rect x="1012" y="256" width="916" height="915.5"/></clipPath>
</defs><g clip-path="url(#pv)" stroke-linejoin="round" stroke-linecap="round"><path d="M1400 514.7L1404.9 553.3L1417.3 584L1424.7 605.3L1430 618.7L1443.3 613.3L1451.3 589.3L1498 589.3L1507.3 612L1520.7 617.3L1528.7 602.7L1538.7 578.7L1545.7 553.3L1552 514.7Z" fill="#86482a" stroke="#2a1a16" stroke-width="1.6"/><path d="M1448 589.3L1448 613.3L1467.3 649.3L1470.7 653.3L1473.3 649.3L1501.3 617.3L1501.3 589.3Z" fill="#f4c8b5"/><path d="M1448 594.7C1448 596.4 1448.1 602.2 1448 605.3C1447.9 608.4 1447.4 612 1447.3 613.3" fill="none" stroke="#2a1a16" stroke-width="1.4"/><path d="M1501.3 594.7C1501.3 595.8 1501.3 600.2 1501.3 601.3" fill="none" stroke="#2a1a16" stroke-width="1.4"/><path d="M1401.9 839.9L1543.2 839.9L1543.2 866.5L1556.5 933.2L1565.4 951.3L1575.1 979.5L1364.1 979.5L1371.8 951.3L1384.6 933.2L1399.3 866.5Z" fill="#ff7f9e"/><path d="M1360.3 976.9C1359 983.3 1354.9 1002.6 1352.6 1015.4C1350.2 1028.2 1347.8 1042.3 1346.2 1053.8C1344.5 1065.4 1342.9 1071.8 1342.8 1084.6C1342.7 1097.4 1344 1115.4 1345.4 1130.8C1346.8 1146.2 1350.3 1169.2 1351.3 1176.9L1585.9 1176.9C1587.4 1168.4 1592.7 1141.9 1594.9 1125.6C1597 1109.4 1598.7 1093.2 1598.7 1079.5C1598.7 1065.8 1597 1055.1 1594.9 1043.6C1592.7 1032.1 1589.1 1021.4 1585.900 1010.3C1582.7 999.1 1577.4 982.5 1575.6 976.9Z" fill="#ff7f9e"/><path d="M1360.3 976.9C1359 983.3 1354.9 1002.6 1352.6 1015.4C1350.2 1028.2 1347.8 1042.3 1346.2 1053.8C1344.5 1065.4 1342.9 1071.8 1342.8 1084.6C1342.7 1097.4 1344 1115.4 1345.4 1130.8C1346.8 1146.2 1350.3 1169.2 1351.3 1176.9" fill="none" stroke="#2a1a16" stroke-width="1.8"/><path d="M1585.9 1176.9C1587.4 1168.4 1592.7 1141.9 1594.9 1125.6C1597 1109.4 1598.7 1093.2 1598.7 1079.5C1598.7 1065.8 1597 1055.1 1594.9 1043.6C1592.7 1032.1 1589.1 1021.4 1585.9 1010.3C1582.7 999.1 1577.4 982.5 1575.6 976.9" fill="none" stroke="#2a1a16" stroke-width="1.8"/><path d="M1409 1094.9C1411.5 1097 1439.7 1100.9 1455.1 1102.6C1470.5 1104.3 1487.2 1106.4 1501.3 1105.1C1515.4 1103.8 1528.2 1099.1 1539.7 1094.9C1551.3 1090.6 1571.8 1080.8 1570.5 1079.5C1569.2 1078.2 1547 1085.5 1532.1 1087.2C1517.1 1088.9 1496.2 1089.3 1480.8 1089.7C1465.4 1090.2 1451.7 1088.9 1439.7 1089.7C1427.8 1090.6 1406.4 1092.7 1409 1094.9Z" fill="#e0577f" opacity=".8" filter="url(#b3)"/><path d="M1409 1115.4C1406.4 1116.7 1432.9 1125.6 1444.9 1130.8C1456.8 1135.9 1468.8 1144 1480.8 1146.2C1492.7 1148.3 1505.6 1146.2 1516.7 1143.6C1527.8 1141 1549.1 1132.9 1547.4 1130.8C1545.7 1128.6 1520.9 1132.1 1506.4 1130.8C1491.9 1129.5 1476.5 1125.6 1460.3 1123.1C1444 1120.5 1411.5 1114.1 1409 1115.4Z" fill="#e0577f" opacity=".8" filter="url(#b3)"/><path d="M1434.6 1064.1C1435.5 1065.4 1466.7 1068.8 1480.8 1069.2C1494.9 1069.7 1506.4 1068.8 1519.2 1066.7C1532.1 1064.5 1557.7 1057.5 1557.7 1056.4C1557.7 1055.3 1532.9 1059.4 1519.2 1060.3C1505.6 1061.1 1489.7 1060.9 1475.6 1061.5C1461.5 1062.2 1433.8 1062.8 1434.6 1064.1Z" fill="#e86489" opacity=".6" filter="url(#b3)"/><path d="M1373.1 1050C1379.1 1050.4 1397 1051.7 1409 1052.6C1420.9 1053.4 1438.9 1054.7 1444.9 1055.1" fill="none" stroke="#ffc0d2" stroke-width="2.2" opacity=".9" filter="url(#b1)"/><path d="M1389.7 1020.5C1392.9 1020.9 1402.8 1021.5 1409 1022.6C1415.2 1023.6 1423.9 1026.2 1426.9 1026.9" fill="none" stroke="#ffc0d2" stroke-width="2.2" opacity=".9" filter="url(#b1)"/><path d="M1555.1 1048.7C1558.1 1048.1 1567.9 1046.4 1573.1 1044.9C1578.2 1043.4 1583.8 1040.6 1585.9 1039.7" fill="none" stroke="#ffc8d8" stroke-width="2.6" opacity=".9" filter="url(#b1)"/><path d="M1544.9 1006.4C1547.4 1005.8 1555.8 1003.8 1560.3 1002.6C1564.7 1001.3 1569.9 999.4 1571.8 998.7" fill="none" stroke="#ffc0d2" stroke-width="2.2" opacity=".9" filter="url(#b1)"/><path d="M1496.2 1033.3C1499.6 1033.8 1516.7 1031.2 1526.9 1028.2C1537.2 1025.2 1556.8 1016.7 1557.7 1015.4C1558.5 1014.1 1540.6 1018.8 1532.1 1020.5C1523.5 1022.2 1512.4 1023.5 1506.4 1025.6C1500.4 1027.8 1492.7 1032.9 1496.2 1033.3Z" fill="#e96a8d" opacity=".6" filter="url(#b3)"/><path d="M1314.1 993.6C1308.8 997.4 1313 1012.2 1311.5 1020.5C1310 1028.8 1306.8 1036.3 1305.1 1043.6C1303.4 1050.9 1301.6 1056.4 1301.3 1064.1C1301 1071.8 1302.3 1081.2 1303.3 1089.7C1304.4 1098.3 1305.7 1111.5 1307.7 1115.4C1309.7 1119.2 1313.5 1115.4 1315.4 1112.8C1317.3 1110.3 1317.7 1104.3 1319.2 1100C1320.7 1095.7 1323.1 1092.3 1324.4 1087.2C1325.6 1082.1 1325.4 1076.5 1326.9 1069.2C1328.4 1062 1331.4 1051.7 1333.3 1043.6C1335.3 1035.5 1336.8 1028.2 1338.5 1020.5C1340.2 1012.8 1347.6 1001.9 1343.6 997.4C1339.5 992.9 1319.4 989.7 1314.1 993.6Z" fill="#ffeadc" stroke="#2a1a16" stroke-width="1.5"/><path d="M1317.2 1043.6C1317.4 1047 1318.9 1057.3 1318.7 1064.1C1318.5 1070.9 1316.4 1077.8 1316.2 1084.6C1315.9 1091.5 1317 1101.7 1317.2 1105.1" fill="none" stroke="#2a1a16" stroke-width="1.2"/><path d="M1312.8 1076.9C1312.6 1079.9 1311.6 1088.9 1311.5 1094.9C1311.5 1100.9 1312.2 1109.8 1312.3 1112.8" fill="none" stroke="#2a1a16" stroke-width="1.0"/><path d="M1632.1 1020.5C1626.5 1024.8 1638.9 1036.3 1639.7 1043.6C1640.6 1050.9 1636.3 1056.4 1637.2 1064.1C1638 1071.8 1642.3 1080.8 1644.9 1089.7C1647.4 1098.7 1650.2 1112 1652.6 1117.9C1654.9 1123.9 1657.6 1127.8 1659 1125.6C1660.4 1123.5 1660.6 1112.8 1661 1105.1C1661.5 1097.4 1660.4 1079.5 1661.5 1079.5C1662.7 1079.5 1666.5 1096.6 1667.9 1105.1C1669.4 1113.7 1669.7 1122.2 1670.5 1130.8C1671.4 1139.3 1672.2 1149.8 1673.1 1156.4C1673.9 1163 1673.9 1168.4 1675.6 1170.5C1677.4 1172.6 1681.6 1172.4 1683.3 1169.2C1685 1166 1685.5 1158.5 1685.9 1151.3C1686.3 1144 1686.1 1134.6 1685.9 1125.6C1685.7 1116.7 1686.3 1107.7 1684.6 1097.4C1682.9 1087.2 1678 1073.9 1675.6 1064.1C1673.3 1054.3 1670.9 1046.2 1670.5 1038.5C1670.1 1030.8 1679.5 1020.9 1673.1 1017.9C1666.7 1015 1637.6 1016.2 1632.1 1020.5Z" fill="#ffeadc" stroke="#2a1a16" stroke-width="1.5"/><path d="M1661 1074.4C1660.9 1077.8 1660.5 1088.5 1660.3 1094.9C1660 1101.3 1659.8 1109.8 1659.7 1112.8" fill="none" stroke="#2a1a16" stroke-width="1.2"/><path d="M1667.9 1110.3C1668.6 1114.5 1670.7 1126.5 1671.8 1135.9C1672.9 1145.3 1673.9 1161.5 1674.4 1166.7" fill="none" stroke="#3a2a22" stroke-width="3.0"/><path d="M1306.9 986.7L1314.1 995.4L1334.6 998.7L1352.6 994.9L1357.2 987.2Z" fill="#f6f6f6" stroke="#8a8a8a" stroke-width="1.0"/><path d="M1622.3 1015.9L1626.9 1029.5L1650 1025.6L1674.4 1020.5L1673.1 1002.6Z" fill="#f6f6f6" stroke="#8a8a8a" stroke-width="1.0"/><path d="M1377.9 636.8C1375 637.4 1365.5 637.4 1360.6 640.5C1355.7 643.6 1351.7 649.3 1348.6 655.4C1345.5 661.6 1344.3 668.8 1342.2 677.3C1340.1 685.8 1337.9 692.8 1335.8 706.6C1333.8 720.4 1332.3 742.1 1330 759.9C1327.6 777.7 1324.4 795.5 1322 813.2C1319.5 831 1317.3 848.8 1315.3 866.5C1313.3 884.3 1311.2 904.4 1310 919.8C1308.7 935.2 1308.6 949 1307.7 959C1306.8 968.9 1305.1 976.1 1304.6 979.5C1308.3 981 1318.1 987.4 1326.9 988.5C1335.8 989.5 1352.6 986.3 1357.7 985.9C1357.9 984 1357.2 980.1 1358.7 974.4C1360.2 968.6 1363.6 958.1 1366.7 951.3C1369.8 944.4 1374.6 939.3 1377.4 933.2C1380.2 927 1380.7 922.9 1383.3 914.5C1385.8 906.1 1390.6 891 1392.6 882.5C1394.6 874.1 1396.1 874.1 1395.3 863.9C1394.4 853.6 1389.5 838.5 1387.3 821.2C1385 803.9 1383.1 777.7 1381.9 759.9C1380.7 742.1 1381.2 726.6 1380.1 714.6C1379 702.6 1376.1 692.4 1375.3 688L1377.9 636.8Z" fill="#ff7f9e" stroke="#ff7f9e" stroke-width="1.5"/><path d="M1377.9 636.8C1375 637.4 1365.5 637.4 1360.6 640.5C1355.7 643.6 1351.7 649.3 1348.6 655.4C1345.5 661.6 1344.3 668.8 1342.2 677.3C1340.1 685.8 1337.9 692.8 1335.8 706.6C1333.8 720.4 1332.3 742.1 1330 759.9C1327.6 777.7 1324.4 795.5 1322 813.2C1319.5 831 1317.3 848.8 1315.3 866.5C1313.3 884.3 1311.2 904.4 1310 919.8C1308.7 935.2 1308.6 949 1307.7 959C1306.8 968.9 1305.1 976.1 1304.6 979.5" fill="none" stroke="#2a1a16" stroke-width="1.8"/><path d="M1304.6 979.5C1308.3 981 1318.1 987.4 1326.9 988.5C1335.8 989.5 1352.6 986.3 1357.7 985.9" fill="none" stroke="#2a1a16" stroke-width="1.4"/><path d="M1357.7 985.9C1357.9 984 1357.2 980.1 1358.7 974.4C1360.2 968.6 1363.6 958.1 1366.7 951.3C1369.8 944.4 1374.6 939.3 1377.4 933.2C1380.2 927 1380.7 922.9 1383.3 914.5C1385.8 906.1 1390.6 891 1392.6 882.5C1394.6 874.1 1396.1 874.1 1395.3 863.9C1394.4 853.6 1389.5 838.5 1387.3 821.2C1385 803.9 1383.1 777.7 1381.9 759.9C1380.7 742.1 1381.2 726.6 1380.1 714.6C1379 702.6 1376.1 692.4 1375.3 688" fill="none" stroke="#2a1a16" stroke-width="1.6"/><path d="M1357.9 650.6C1359.9 655.1 1366.5 668 1369.9 677.3C1373.4 686.6 1377 701.7 1378.5 706.6" fill="none" stroke="#c9476d" stroke-width="1.0" opacity=".7"/><path d="M1569.8 637.6C1573.6 638.8 1586.5 640.6 1592.5 644.8C1598.5 649 1602.2 655.4 1605.8 662.6C1609.4 669.8 1611.5 678.4 1614.1 688C1616.6 697.5 1618.1 705.7 1621 719.9C1623.9 734.2 1627.7 755.5 1631.7 773.2C1635.7 791 1640.6 808.8 1645 826.5C1649.3 844.3 1655.2 862.5 1657.8 879.9C1660.3 897.2 1658.1 915.4 1660.3 930.8C1662.4 946.1 1667.6 959.8 1670.5 971.8C1673.4 983.8 1676.5 997.4 1677.7 1002.6C1673.1 1003.6 1660 1006.8 1650 1009C1640 1011.1 1623.3 1014.3 1617.9 1015.4C1616 1006.8 1610.5 980.8 1606.4 964.1C1602.4 947.4 1597.9 931.6 1593.6 915.4C1589.3 899.1 1584.5 882.2 1580.5 866.5C1576.5 850.8 1573.2 836.8 1569.8 821.2C1566.5 805.7 1562.3 787.9 1560.5 773.2C1558.7 758.6 1558.3 745.3 1559.2 733.3C1560.1 721.3 1564.7 706.6 1565.8 701.3L1569.8 637.6Z" fill="#ff7f9e" stroke="#ff7f9e" stroke-width="1.5"/><path d="M1569.8 637.6C1573.6 638.8 1586.5 640.6 1592.5 644.8C1598.5 649 1602.2 655.4 1605.8 662.6C1609.4 669.8 1611.5 678.4 1614.1 688C1616.6 697.5 1618.1 705.7 1621 719.9C1623.9 734.2 1627.7 755.5 1631.7 773.2C1635.7 791 1640.6 808.8 1645 826.5C1649.3 844.3 1655.2 862.5 1657.8 879.9C1660.3 897.2 1658.1 915.4 1660.3 930.8C1662.4 946.1 1667.6 959.8 1670.5 971.8C1673.4 983.8 1676.5 997.4 1677.7 1002.6" fill="none" stroke="#2a1a16" stroke-width="1.8"/><path d="M1677.7 1002.6C1673.1 1003.6 1660 1006.8 1650 1009C1640 1011.1 1623.3 1014.3 1617.9 1015.4" fill="none" stroke="#2a1a16" stroke-width="1.4"/><path d="M1617.9 1015.4C1616 1006.8 1610.5 980.8 1606.4 964.1C1602.4 947.4 1597.9 931.6 1593.6 915.4C1589.3 899.1 1584.5 882.2 1580.5 866.5C1576.5 850.8 1573.2 836.8 1569.8 821.2C1566.5 805.7 1562.3 787.9 1560.5 773.2C1558.7 758.6 1558.3 745.3 1559.2 733.3C1560.1 721.3 1564.7 706.6 1565.8 701.3" fill="none" stroke="#2a1a16" stroke-width="1.6"/><path d="M1591.2 650.6C1588.9 655.1 1582 668.4 1577.8 677.3C1573.6 686.2 1567.8 699.5 1565.8 703.9" fill="none" stroke="#c9476d" stroke-width="1.0" opacity=".7"/><path d="M1338 725.3C1341.1 724.4 1350.4 719.5 1356.6 719.9C1362.8 720.4 1372.2 726.6 1375.3 727.9" fill="none" stroke="#e0557a" stroke-width="5" opacity=".4" filter="url(#b3)"/><path d="M1335.3 751.9C1338.8 750.6 1349.5 746.1 1356.6 743.9C1363.7 741.7 1374.4 739.5 1377.9 738.6" fill="none" stroke="#e0557a" stroke-width="5" opacity=".4" filter="url(#b3)"/><path d="M1331.3 789.2C1335.5 786.6 1348.4 778.1 1356.6 773.2C1364.8 768.4 1376.6 762.1 1380.6 759.9" fill="none" stroke="#e0557a" stroke-width="5" opacity=".4" filter="url(#b3)"/><path d="M1564.5 717.3C1567.6 715.5 1576.5 707.9 1583.2 706.6C1589.8 705.3 1600.9 708.8 1604.5 709.3" fill="none" stroke="#e0557a" stroke-width="5" opacity=".35" filter="url(#b3)"/><path d="M1565.8 743.9C1569.6 743 1580.3 738.6 1588.5 738.6C1596.7 738.6 1610.7 743 1615.1 743.9" fill="none" stroke="#e0557a" stroke-width="5" opacity=".35" filter="url(#b3)"/><path d="M1567.2 725.3C1572.1 725.7 1587.6 725.7 1596.5 727.9C1605.4 730.2 1616.5 736.8 1620.5 738.6" fill="none" stroke="#e0557a" stroke-width="5" opacity=".35" filter="url(#b3)"/><path d="M1338 866.5C1341.1 871 1352.2 882.1 1356.6 893.2C1361.1 904.3 1363.3 926.5 1364.6 933.2" fill="none" stroke="#e0557a" stroke-width="6" opacity=".3" filter="url(#b3)"/><path d="M1604.5 901.2C1607.6 904.3 1615.6 912.3 1623.1 919.8C1630.7 927.4 1645.3 942 1649.8 946.5" fill="none" stroke="#e0557a" stroke-width="6" opacity=".3" filter="url(#b3)"/><path d="M1442 602.7L1428.7 624L1428 653.3L1435.3 693.3L1443.3 710L1436.6 693.3L1452.6 738.6L1465.4 778.6L1484.5 749.3L1503.2 706.6L1513.9 666.6L1503.3 693.3L1515.3 640L1516 621.3L1511.3 604L1502 600L1472.7 648.7L1466 648L1447.3 612Z" fill="#fbfbfb"/><path d="M1465.3 664L1465.3 710L1463.2 706.6L1464.6 749.3L1466.4 773.2L1471.2 749.3L1473.9 706.6L1475.3 710L1475.3 664Z" fill="#f1f1f3"/><path d="M1463.2 677.3C1463.3 684.4 1463.4 706.2 1463.8 719.9C1464.1 733.7 1465.1 753.3 1465.4 759.9" fill="none" stroke="#d9d9de" stroke-width="1.2"/><path d="M1473.3 677.3C1473.3 684.4 1473.7 706.2 1473.3 719.9C1473 733.7 1471.6 753.3 1471.2 759.9" fill="none" stroke="#d9d9de" stroke-width="1.2"/><path d="M1464.7 651.3L1459.3 658.7L1464.7 663.7L1475.3 663.7L1480.4 658.7L1474 651.3Z" fill="#dcdcdc" stroke="#3a3a3a" stroke-width="1.2"/><path d="M1443.3 684L1435.3 686.7L1430 673.3L1459.3 658.7Z" fill="#fdfdfd"/><path d="M1493.3 683.3L1499.3 688L1507.3 673.3L1480 658.7Z" fill="#fdfdfd"/><path d="M1442 605.3L1466 648L1470.7 653.3" fill="none" stroke="#2c2c2c" stroke-width="2.4"/><path d="M1463.3 651.3L1443.3 684" fill="none" stroke="#2c2c2c" stroke-width="2.4"/><path d="M1508 609.3L1472.7 648.7L1470.7 653.3" fill="none" stroke="#2c2c2c" stroke-width="2.4"/><path d="M1478 652.7L1493.3 682.7" fill="none" stroke="#2c2c2c" stroke-width="2.4"/><path d="M1443.3 684L1435.3 686.7" fill="none" stroke="#c9c9c9" stroke-width="1.0"/><path d="M1493.3 682.7L1499.3 687.3" fill="none" stroke="#c9c9c9" stroke-width="1.0"/><path d="M1440.7 603.3L1448 600L1448.7 612L1446 616Z" fill="#f2f2f2" stroke="#bbb" stroke-width="0.8"/><path d="M1501.3 600L1512 604L1508.7 610.7L1502 612Z" fill="#e4e4e4" stroke="#bbb" stroke-width="0.8"/><path d="M1409.9 632C1407.2 632.3 1399.3 633.3 1393.9 634.1C1388.6 634.9 1380.6 636.3 1377.9 636.8C1377.5 645.3 1374.8 675 1375.3 688C1375.7 700.9 1379.5 702.6 1380.6 714.6C1381.7 726.6 1380.8 742.1 1381.9 759.9C1383 777.7 1385 803.9 1387.3 821.2C1389.5 838.5 1394.4 853.6 1395.3 863.9C1396.1 874.1 1394.6 874.1 1392.6 882.5C1390.6 891 1385.8 906.1 1383.3 914.5C1380.7 922.9 1380.2 927 1377.4 933.2C1374.6 939.3 1369.8 944.4 1366.7 951.3C1363.6 958.1 1360 970.5 1358.7 974.4C1364.5 977.4 1380.9 987.5 1393.6 992.3C1406.2 997.1 1425.6 1002.2 1434.6 1003.1C1443.6 1003.9 1445.3 998.4 1447.4 997.4C1449.2 991.9 1454.7 975.2 1458.2 964.1C1461.7 953 1465.6 944.8 1468.5 930.8C1471.3 916.7 1473.8 895 1475.2 879.9C1476.6 864.7 1477.2 852.3 1477.1 839.9C1476.9 827.4 1474.9 811 1474.4 805.2C1473 800.3 1470 787.9 1465.9 775.9C1461.8 763.9 1454.8 747 1449.9 733.3C1445 719.5 1440 706.6 1436.6 693.3C1433.1 680 1430 664.9 1429.1 653.3C1428.2 641.8 1430.9 628.9 1431.2 624L1409.9 632Z" fill="#ff7f9e" stroke="#ff7f9e" stroke-width="1.2"/><path d="M1409.9 632C1407.2 632.3 1399.3 633.3 1393.9 634.1C1388.6 634.9 1380.6 636.3 1377.9 636.8" fill="none" stroke="#2a1a16" stroke-width="1.8"/><path d="M1358.7 974.4C1364.5 977.4 1380.9 987.5 1393.6 992.3C1406.2 997.1 1425.6 1002.2 1434.6 1003.1C1443.6 1003.9 1445.3 998.4 1447.4 997.4" fill="none" stroke="#2a1a16" stroke-width="1.8"/><path d="M1447.4 997.4C1449.2 991.9 1454.7 975.2 1458.2 964.1C1461.7 953 1465.6 944.8 1468.5 930.8C1471.3 916.7 1473.8 895 1475.2 879.9C1476.6 864.7 1477.2 852.3 1477.1 839.9C1476.9 827.4 1474.9 811 1474.4 805.2" fill="none" stroke="#2a1a16" stroke-width="1.6"/><path d="M1540.5 633.3C1543.2 633.6 1551.6 634.5 1556.5 635.2C1561.4 635.9 1567.6 637.2 1569.8 637.6C1569.2 648.2 1567.6 685.3 1565.8 701.3C1564.1 717.2 1560.7 719 1559.2 733.3C1557.6 747.5 1557.8 768.8 1556.5 786.6C1555.2 804.3 1552.7 826.5 1551.2 839.9C1549.6 853.2 1547.2 857.6 1547.2 866.5C1547.2 875.4 1548.3 882.1 1551.2 893.2C1554.1 904.3 1561.3 923.5 1564.5 933.2C1567.7 942.8 1567.8 945.3 1570.5 951.3C1573.2 957.3 1579.1 966.2 1580.8 969.2C1574.8 972.6 1556.8 984.5 1544.9 989.7C1532.9 995 1518.4 1000.1 1509 1000.5C1499.6 1000.9 1491.9 993.7 1488.5 992.3C1486.8 987.2 1481.5 971.8 1478.2 961.5C1474.9 951.3 1469 944.4 1468.5 930.8C1468 917.2 1473.8 895 1475.2 879.9C1476.6 864.7 1477.2 852.3 1477.1 839.9C1476.9 827.4 1474.9 811 1474.4 805.2C1477 799.9 1482.9 786.1 1489.9 773.2C1496.9 760.4 1509.4 739.9 1516.5 727.9C1523.6 715.9 1527.4 709.3 1532.5 701.3C1537.6 693.3 1544.7 683.5 1547.2 680C1545 678.4 1532.3 674.4 1533.8 670.6C1535.4 666.9 1555.4 663.5 1556.5 657.3C1557.6 651.1 1543.2 637.3 1540.5 633.3Z" fill="#ff7f9e" stroke="#ff7f9e" stroke-width="1.2"/><path d="M1540.5 633.3C1543.2 633.6 1551.6 634.5 1556.5 635.2C1561.4 635.9 1567.6 637.2 1569.8 637.6" fill="none" stroke="#2a1a16" stroke-width="1.8"/><path d="M1565.8 701.3C1564.7 706.6 1560.7 719 1559.2 733.3C1557.6 747.5 1557.8 768.8 1556.5 786.6C1555.2 804.3 1552.7 826.5 1551.2 839.9C1549.6 853.2 1547.2 857.6 1547.2 866.5C1547.2 875.4 1548.3 882.1 1551.2 893.2C1554.1 904.3 1561.3 923.5 1564.5 933.2C1567.7 942.8 1567.8 945.3 1570.5 951.3C1573.2 957.3 1579.1 966.2 1580.8 969.2" fill="none" stroke="#2a1a16" stroke-width="1.6"/><path d="M1580.8 969.2C1574.8 972.6 1556.8 984.5 1544.9 989.7C1532.9 995 1518.4 1000.1 1509 1000.5C1499.6 1000.9 1491.9 993.7 1488.5 992.3" fill="none" stroke="#2a1a16" stroke-width="1.8"/><path d="M1488.5 992.3C1486.8 987.2 1481.5 971.8 1478.2 961.5C1474.9 951.3 1469 944.4 1468.5 930.8C1468 917.2 1473.8 895 1475.2 879.9C1476.6 864.7 1477.2 852.3 1477.1 839.9C1476.9 827.4 1474.9 811 1474.4 805.2" fill="none" stroke="#2a1a16" stroke-width="1.6"/><path d="M1516.5 624L1513.9 666.6L1503.2 706.6L1484.5 749.3L1468.6 783.9L1474.4 805.2L1489.9 773.2L1516.5 727.9L1547.2 680L1533.8 670.6L1556.5 657.3L1540.5 633.3Z" fill="#ff7f9e" stroke="#2a1a16" stroke-width="1.6"/><path d="M1431.2 624L1409.9 632L1387.3 657.3L1409.9 668L1393.9 680L1423.2 727.9L1452.6 773.2L1474.4 805.2L1465.9 775.9L1449.9 733.3L1436.6 693.3L1429.1 653.3Z" fill="#ff7f9e" stroke="#2a1a16" stroke-width="1.6"/><path d="M1474.4 805.2C1475 811 1477.5 827.4 1477.9 839.9C1478.2 852.3 1478.2 864.7 1476.5 879.9C1474.9 895 1470.2 918.9 1467.9 930.8C1465.7 942.7 1464.1 947.9 1463.3 951.3" fill="none" stroke="#c93762" stroke-width="2.2"/><path d="M1386.7 818.7C1387.7 815.5 1389.2 812.4 1390.5 816C1391.7 819.5 1393.5 831.5 1394.5 840C1395.4 848.4 1396.9 856.4 1396.1 866.6C1395.3 876.8 1392.9 890.2 1389.7 901.3C1386.4 912.4 1380.5 923.7 1376.3 933.3C1372.2 942.9 1365.3 962.4 1364.6 958.8C1363.9 955.3 1369.5 927.3 1372.1 911.9C1374.6 896.6 1378 879.5 1380.1 866.6C1382.2 853.7 1383.5 842.6 1384.6 834.6C1385.7 826.7 1385.7 821.8 1386.7 818.7Z" fill="#fff"/><path d="M1390.5 816C1391.1 820 1393.5 831.5 1394.5 840C1395.4 848.4 1396.9 856.4 1396.1 866.6C1395.3 876.8 1392.9 890.2 1389.7 901.3C1386.4 912.4 1380.5 923.7 1376.3 933.3C1372.2 942.9 1366.6 954.6 1364.6 958.8" fill="none" stroke="#2a1a16" stroke-width="1.6"/><path d="M1386.7 818.7C1386.4 821.3 1385.7 826.7 1384.6 834.6C1383.5 842.6 1382.2 853.7 1380.1 866.6C1378 879.5 1374.6 896.6 1372.1 911.9C1369.5 927.3 1365.8 951 1364.6 958.8" fill="none" stroke="#2a1a16" stroke-width="1.6"/><path d="M1395.3 886.5L1427.2 893.2L1425.9 911.8L1388.6 903.8Z" fill="#ff7f9e" stroke="#2a1a16" stroke-width="1.5"/><path d="M1509.9 894.5L1549.8 887.8L1552.5 906.5L1509.9 912.4Z" fill="#ff7f9e" stroke="#2a1a16" stroke-width="1.5"/><path d="M1399.3 717.3C1402.8 719 1414.4 726.6 1420.6 727.9C1426.8 729.3 1433.9 725.7 1436.6 725.3" fill="none" stroke="#d94d76" stroke-width="7" opacity="0.315" filter="url(#b3)"/><path d="M1511.2 725.3C1514.7 725.3 1525 726.6 1532.5 725.3C1540.1 723.9 1552.5 718.6 1556.5 717.3" fill="none" stroke="#d94d76" stroke-width="7" opacity="0.315" filter="url(#b3)"/><path d="M1423.2 802.6C1426.4 804.3 1435.2 810.1 1441.9 813.2C1448.6 816.3 1459.7 819.9 1463.2 821.2" fill="none" stroke="#d94d76" stroke-width="9" opacity="0.27999999999999997" filter="url(#b3)"/><path d="M1481.9 802.6C1484.5 801.7 1492.1 800.3 1497.9 797.2C1503.6 794.1 1513.4 786.1 1516.5 783.9" fill="none" stroke="#d94d76" stroke-width="9" opacity="0.27999999999999997" filter="url(#b3)"/><path d="M1441.9 890.5C1443.7 889.2 1449 884.3 1452.6 882.5C1456.1 880.7 1461.4 880.3 1463.2 879.9" fill="none" stroke="#d94d76" stroke-width="8" opacity="0.315" filter="url(#b3)"/><path d="M1399.3 927.8C1402.8 932.3 1414.4 947.4 1420.6 954.5C1426.8 961.6 1433.9 967.8 1436.6 970.5" fill="none" stroke="#d94d76" stroke-width="9" opacity="0.27999999999999997" filter="url(#b3)"/><path d="M1489.9 914.5C1494.3 918.9 1506.8 934.5 1516.5 941.2C1526.3 947.8 1543.2 952.3 1548.5 954.5" fill="none" stroke="#d94d76" stroke-width="10" opacity="0.27999999999999997" filter="url(#b3)"/><path d="M1516.5 919.8C1521 922.5 1535.2 932.3 1543.2 935.8C1551.2 939.4 1560.9 940.3 1564.5 941.2" fill="none" stroke="#d94d76" stroke-width="8" opacity="0.24499999999999997" filter="url(#b3)"/><circle cx="1466.4" cy="822.5" r="5.2" fill="url(#bt)" stroke="#555" stroke-width="1"/><circle cx="1467.2" cy="883" r="5.2" fill="url(#bt)" stroke="#555" stroke-width="1"/><path d="M1421.3 662C1420.6 660.1 1418.8 655.4 1416.7 650.7C1414.6 645.9 1411.3 639.6 1408.7 633.3C1406 627.1 1403.3 620.7 1400.7 613.3C1398 606 1395.6 597.6 1392.7 589.3C1389.8 581.1 1386 572.2 1383.3 564C1380.7 555.8 1378.7 547.3 1376.7 540C1374.7 532.7 1372.9 526.8 1371.3 520C1369.8 513.2 1368 505.9 1367.3 499.3C1366.6 492.8 1366.7 487.8 1367.1 480.7C1367.5 473.6 1368.4 464 1369.7 456.7C1371.1 449.3 1373.1 443.3 1375.3 436.7C1377.6 430 1380 422.9 1383.3 416.7C1386.7 410.4 1390.4 404.7 1395.3 399.3C1400.2 394 1406 388.9 1412.7 384.7C1419.3 380.4 1427.3 376.9 1435.3 374C1443.3 371.1 1451.6 368.4 1460.7 367.3C1469.8 366.2 1480.7 366 1490 367.3C1499.3 368.7 1508.4 372 1516.7 375.3C1524.9 378.7 1532.9 382.7 1539.3 387.3C1545.8 392 1550.4 397.1 1555.3 403.3C1560.2 409.6 1564.9 416.9 1568.7 424.7C1572.4 432.4 1575.6 441.3 1578 450C1580.4 458.7 1582.3 468.9 1583.3 476.7C1584.3 484.4 1584.2 490.2 1584 496.7C1583.8 503.1 1582.9 510.1 1582.3 515.3C1581.6 520.6 1580.9 523.4 1580 528C1579.1 532.6 1578.6 535.1 1576.7 542.7C1574.8 550.2 1571.8 563.8 1568.7 573.3C1565.6 582.9 1561.6 591.1 1558 600C1554.4 608.9 1550.9 618.2 1547.3 626.7C1543.8 635.1 1539.6 644.6 1536.7 650.7C1533.8 656.8 1531.1 661.2 1530 663.3C1530.6 659.4 1532.3 648.3 1533.3 640C1534.3 631.7 1534.9 622.2 1536 613.3C1537.1 604.4 1538.7 594.9 1540 586.7C1541.3 578.4 1542.7 571.1 1544 564C1545.3 556.9 1546.9 551.3 1548 544C1549.1 536.7 1550.2 524 1550.7 520L1402 520C1402.4 524 1403.6 536.7 1404.7 544C1405.8 551.3 1407.1 555.6 1408.7 564C1410.2 572.4 1412.7 586.4 1414 594.7C1415.3 602.9 1415.8 605.8 1416.7 613.3C1417.6 620.9 1418.6 631.9 1419.3 640C1420.1 648.1 1421 658.3 1421.3 662Z" fill="url(#hg)" stroke="#2a1a16" stroke-width="2.4"/><path d="M1430 443.3C1443.3 429.1 1465.6 424.7 1483.3 424.7C1501.1 424.7 1526 427.4 1536.7 443.3C1547.3 459.2 1546 504.3 1547.3 520C1548.7 535.7 1545.8 531.8 1544.7 537.3C1543.6 542.9 1542.4 548.2 1540.7 553.3C1538.9 558.4 1536.9 563.6 1534 568C1531.1 572.4 1527.1 576.4 1523.3 580C1519.6 583.6 1515 586.8 1511.3 589.3C1507.7 591.8 1504.2 593.5 1501.3 594.9C1498.4 596.4 1496.8 597 1494 598C1491.2 599 1487.8 600.1 1484.7 600.7C1481.6 601.3 1478.4 601.5 1475.3 601.6C1472.2 601.7 1469.1 601.6 1466 601.1C1462.9 600.6 1459.7 599.7 1456.7 598.7C1453.7 597.6 1451.1 596.3 1448 594.9C1444.9 593.6 1441.4 592.7 1438 590.7C1434.6 588.6 1430.9 586 1427.3 582.7C1423.8 579.3 1419.6 575.6 1416.7 570.7C1413.8 565.8 1411.8 559.1 1410 553.3C1408.2 547.6 1407.1 541.6 1406 536C1404.9 530.4 1403.8 524.3 1403.3 520C1402.9 515.7 1398.9 522.8 1403.3 510C1407.8 497.2 1416.7 457.6 1430 443.3Z" fill="#ffeadc"/><path d="M1403.3 520C1403.8 522.7 1404.9 530.4 1406 536C1407.1 541.6 1408.2 547.6 1410 553.3C1411.8 559.1 1413.8 565.8 1416.7 570.7C1419.6 575.6 1423.8 579.3 1427.3 582.7C1430.9 586 1434.6 588.6 1438 590.7C1441.4 592.7 1446.3 594.2 1448 594.9" fill="none" stroke="#2a1a16" stroke-width="1.5"/><path d="M1501.3 594.9C1503 594 1507.7 591.8 1511.3 589.3C1515 586.8 1519.6 583.6 1523.3 580C1527.1 576.4 1531.1 572.4 1534 568C1536.9 563.6 1538.9 558.4 1540.7 553.3C1542.4 548.2 1543.6 542.9 1544.7 537.3C1545.8 531.8 1546.9 522.9 1547.3 520" fill="none" stroke="#2a1a16" stroke-width="1.5"/><path d="M1448 594.9C1449.4 595.6 1453.7 597.6 1456.7 598.7C1459.7 599.7 1462.9 600.6 1466 601.1C1469.1 601.6 1472.2 601.7 1475.3 601.6C1478.4 601.5 1481.6 601.3 1484.7 600.7C1487.8 600.1 1491.2 599 1494 598C1496.8 597 1500.1 595.4 1501.3 594.9" fill="none" stroke="#d7a08c" stroke-width="1.0"/><path d="M1524.7 422.7C1525.6 422.4 1530 434.3 1532.7 440.7C1535.3 447 1538.2 454 1540.7 460.7C1543.1 467.3 1545.3 474 1547.3 480.7C1549.3 487.3 1551.2 493.6 1552.7 500.7C1554.1 507.8 1556.4 519.6 1556 523.3C1555.6 527.1 1551.5 527.1 1550 523.3C1548.5 519.6 1548.5 507.8 1547.1 500.7C1545.6 493.6 1543.5 487.3 1541.5 480.7C1539.4 474 1537 467.1 1534.7 460.7C1532.3 454.2 1529 448.3 1527.3 442C1525.7 435.7 1523.8 422.9 1524.7 422.7Z" fill="#f3bca6" opacity=".9"/><path d="M1469.3 502C1471.3 499.1 1477.4 494.4 1482 490C1486.6 485.6 1492 480.9 1496.7 475.3C1501.3 469.8 1509.1 456.4 1510 456.7C1510.9 456.9 1506 470.4 1502 476.7C1498 482.9 1491.3 488.9 1486 494C1480.7 499.1 1472.8 506 1470 507.3C1467.2 508.7 1467.3 504.9 1469.3 502Z" fill="#f3bca6" opacity=".9"/><ellipse cx="1429.3" cy="556.7" rx="9.800" ry="6.200" fill="#fbcfd2" opacity=".8" filter="url(#b1)"/><circle cx="1423.3" cy="556.7" r="1.6" fill="#fff" opacity=".8"/><ellipse cx="1522" cy="556" rx="9.800" ry="6.200" fill="#fbcfd2" opacity=".8" filter="url(#b1)"/><circle cx="1528" cy="556" r="1.6" fill="#fff" opacity=".8"/><ellipse cx="1432.8" cy="512.1" rx="14.8" ry="13.2" fill="#fff"/><ellipse cx="1434.3" cy="511.1" rx="11.4" ry="14.2" fill="url(#eg)" stroke="#1b2a5e" stroke-width="1"/><ellipse cx="1434.3" cy="509.6" rx="6" ry="8" fill="#16285c" opacity=".6"/><ellipse cx="1434.3" cy="521.3" rx="8" ry="3.2" fill="#7fb0ee" opacity=".75" filter="url(#b1)"/><circle cx="1427" cy="504.8" r="2.4" fill="#fff"/><circle cx="1430.1" cy="508.5" r="1.1" fill="#fff"/><ellipse cx="1518.4" cy="512.1" rx="14.8" ry="13.2" fill="#fff"/><ellipse cx="1516.9" cy="511.1" rx="11.4" ry="14.2" fill="url(#eg)" stroke="#1b2a5e" stroke-width="1"/><ellipse cx="1516.9" cy="509.6" rx="6" ry="8" fill="#16285c" opacity=".6"/><ellipse cx="1516.9" cy="521.3" rx="8" ry="3.2" fill="#7fb0ee" opacity=".75" filter="url(#b1)"/><circle cx="1509.6" cy="504.8" r="2.4" fill="#fff"/><circle cx="1512.7" cy="508.5" r="1.1" fill="#fff"/><path d="M1413.7 510.7C1414.7 509.4 1417.1 505.5 1419.3 503.3C1421.6 501.2 1424.4 499 1427.3 497.7C1430.2 496.5 1433.7 496 1436.7 496C1439.7 496 1442.9 496.6 1445.3 497.7C1447.8 498.8 1450.3 501.8 1451.3 502.7" fill="none" stroke="#1c1414" stroke-width="2.6"/><path d="M1413.7 510.7C1414.3 510.1 1416.7 507.9 1417.3 507.3" fill="none" stroke="#1c1414" stroke-width="3.2"/><path d="M1499.1 503.3C1500.2 502.4 1503.3 499 1506 497.7C1508.7 496.5 1512.2 496 1515.3 496C1518.4 496 1521.8 496.7 1524.7 498C1527.6 499.3 1530.4 501.8 1532.7 504C1534.9 506.2 1537.3 510.1 1538.3 511.3" fill="none" stroke="#1c1414" stroke-width="2.6"/><path d="M1534.7 507.3C1535.3 508 1537.7 510.9 1538.3 511.6" fill="none" stroke="#1c1414" stroke-width="3.2"/><path d="M1435.3 491.6C1436.7 491.6 1441 491.2 1443.3 491.3C1445.7 491.4 1448.3 492 1449.3 492.1" fill="none" stroke="#3a2a28" stroke-width="1.0"/><path d="M1503.3 491.6C1504.4 491.5 1507.6 491 1510 491.1C1512.4 491.1 1516.7 491.7 1518 491.9" fill="none" stroke="#3a2a28" stroke-width="1.0"/><path d="M1475.3 541.3L1475.6 544" fill="none" stroke="#3a2a28" stroke-width="1.2"/><path d="M1467.3 568.8C1468.1 568.6 1470.6 568 1472 567.7C1473.4 567.5 1474.7 567.4 1476 567.5C1477.3 567.5 1478.7 567.8 1480 568C1481.3 568.2 1483.3 568.7 1484 568.8" fill="none" stroke="#5a3a34" stroke-width="1.4"/><path d="M1398.7 544.7L1402.3 544L1403.1 555.3L1399.6 555.7Z" fill="#3a302c" stroke="#1c1414" stroke-width="0.8"/><path d="M1549.3 544.7L1552.9 544L1552.7 554.9L1549.7 555.5Z" fill="#3a302c" stroke="#1c1414" stroke-width="0.8"/><path d="M1402.7 523.3C1403.9 520.9 1406.8 513.1 1410 508.7C1413.2 504.2 1418.2 500 1422 496.7C1425.8 493.3 1428.7 491.6 1432.7 488.7C1436.7 485.8 1441.3 482.2 1446 479.3C1450.7 476.4 1456.2 473.8 1460.7 471.3C1465.1 468.9 1468.9 467.3 1472.7 464.7C1476.4 462 1480.4 458.2 1483.3 455.3C1486.2 452.4 1488.3 449.3 1490 447.3C1491.7 445.3 1492.8 444 1493.3 443.3C1492.6 446.4 1490.8 455.8 1488.7 462C1486.6 468.2 1483.1 475.3 1480.7 480.7C1478.2 486 1475.9 490.4 1474 494C1472.1 497.6 1470.1 500.7 1469.3 502C1471.2 500 1476.3 494.4 1480.7 490C1485 485.6 1490.7 480.7 1495.3 475.3C1500 470 1504.9 463.8 1508.7 458C1512.4 452.2 1515.3 446.6 1518 440.7C1520.7 434.8 1523.6 425.7 1524.7 422.7C1525.3 420.8 1528.9 416.1 1528.7 411.3C1528.4 406.6 1528.7 399.3 1523.3 394C1518 388.7 1507.8 382.2 1496.7 379.3C1485.6 376.4 1470 374.2 1456.7 376.7C1443.3 379.1 1427.1 385.1 1416.7 394C1406.2 402.9 1398.9 417.3 1394 430C1389.1 442.7 1388 457.8 1387.3 470C1386.7 482.2 1387.4 494.4 1390 503.3C1392.6 512.2 1400.6 520 1402.7 523.3Z" fill="url(#hg)"/><path d="M1402.7 523.3C1403.9 520.9 1406.8 513.1 1410 508.7C1413.2 504.2 1418.2 500 1422 496.7C1425.8 493.3 1428.7 491.6 1432.7 488.7C1436.7 485.8 1441.3 482.2 1446 479.3C1450.7 476.4 1456.2 473.8 1460.7 471.3C1465.1 468.9 1468.9 467.3 1472.7 464.7C1476.4 462 1480.4 458.2 1483.3 455.3C1486.2 452.4 1488.3 449.3 1490 447.3C1491.7 445.3 1492.8 444 1493.3 443.3C1492.6 446.4 1490.8 455.8 1488.7 462C1486.6 468.2 1483.1 475.3 1480.7 480.7C1478.2 486 1475.9 490.4 1474 494C1472.1 497.6 1470.1 500.7 1469.3 502C1471.2 500 1476.3 494.4 1480.7 490C1485 485.6 1490.7 480.7 1495.3 475.3C1500 470 1504.9 463.8 1508.7 458C1512.4 452.2 1515.3 446.6 1518 440.7C1520.7 434.8 1523.6 425.7 1524.7 422.7" fill="none" stroke="#2a1a16" stroke-width="1.6"/><path d="M1524.7 422.7C1526 425.7 1530 434.3 1532.7 440.7C1535.3 447 1538.2 454 1540.7 460.7C1543.1 467.3 1545.3 474 1547.3 480.7C1549.3 487.3 1551.2 493.6 1552.7 500.7C1554.1 507.8 1556.4 518.8 1556 523.3C1555.6 527.9 1551.7 524.1 1550 528C1548.3 531.9 1546.7 543.6 1546 546.7" fill="none" stroke="#2a1a16" stroke-width="1.5"/><path d="M1411.6 480C1413.3 478.9 1418 475.2 1422 473.3C1426 471.5 1430.9 469.8 1435.3 468.9C1439.8 468.1 1444.4 468.2 1448.7 468.1C1452.9 468.1 1458.7 468.6 1460.7 468.7" fill="none" stroke="#1c1414" stroke-width="1.5"/><path d="M1494.7 468.4C1496.8 468.4 1502.8 467.8 1507.3 468.4C1511.9 469 1517.3 470.5 1522 472C1526.7 473.5 1531.7 475.6 1535.3 477.3C1538.9 479 1542.2 481.4 1543.6 482.3" fill="none" stroke="#1c1414" stroke-width="1.5"/><path d="M1398 408.7C1398 407.9 1411.8 403 1419.3 401.3C1426.9 399.7 1434.9 399.2 1443.3 398.7C1451.8 398.2 1462 398.1 1470 398.3C1478 398.4 1487 399.6 1491.3 399.6C1495.7 399.6 1494.4 397.5 1496 398C1497.6 398.5 1505 401.7 1500.7 402.7C1496.3 403.6 1479.6 403.4 1470 403.6C1460.4 403.8 1451.8 403.2 1443.3 403.6C1434.9 404 1426.9 405.2 1419.3 406C1411.8 406.8 1398 409.4 1398 408.7Z" fill="#ffd23c" opacity=".55" filter="url(#b1)"/><path d="M1406 405.3C1406 405.1 1418.4 402.6 1424.7 401.7C1430.9 400.9 1435.8 400.6 1443.3 400.4C1450.9 400.2 1462 400.2 1470 400.4C1478 400.6 1487.1 401.4 1491.3 401.3C1495.6 401.3 1494.2 399.8 1495.3 400C1496.4 400.2 1502.2 402.1 1498 402.4C1493.8 402.7 1479.1 402.1 1470 402C1460.9 401.9 1450.9 401.8 1443.3 402C1435.8 402.2 1430.9 402.8 1424.7 403.3C1418.4 403.9 1406 405.6 1406 405.3Z" fill="#fff05a" opacity=".9"/><path d="M1528.7 403.3C1529.1 402.5 1538.4 406.2 1542 406.7C1545.6 407.1 1547.3 405.7 1550 406C1552.7 406.3 1558.4 407.6 1558 408.7C1557.6 409.7 1550.4 411.9 1547.3 412.4C1544.2 412.9 1542.4 413.1 1539.3 411.6C1536.2 410.1 1528.2 404.2 1528.7 403.3Z" fill="#ffd23c" opacity=".55" filter="url(#b1)"/><path d="M1534 405.3C1534.2 405.1 1539.8 408.3 1542 408.7C1544.2 409 1545.3 407.3 1547.3 407.3C1549.3 407.3 1554.2 408.1 1554 408.7C1553.8 409.2 1548.2 410.4 1546 410.7C1543.8 410.9 1542.7 411.2 1540.7 410.3C1538.7 409.4 1533.8 405.6 1534 405.3Z" fill="#fff05a" opacity=".9"/><path d="M1443.3 456.7C1445.3 452.2 1456.7 448.7 1463.3 443.3C1470 438 1478.2 430.9 1483.3 424.7C1488.4 418.4 1492 406 1494 406C1496 406 1496.7 418.4 1495.3 424.7C1494 430.9 1490.2 437.3 1486 443.3C1481.8 449.3 1475.8 456.2 1470 460.7C1464.2 465.1 1455.8 470.7 1451.3 470C1446.9 469.3 1441.3 461.1 1443.3 456.7Z" fill="#f07f22" opacity=".45" filter="url(#b3)"/><path d="M1526 419.3C1526 424.4 1535.3 434.9 1539.3 443.3C1543.3 451.8 1546.9 460 1550 470C1553.1 480 1555.8 503.3 1558 503.3C1560.2 503.3 1563.8 481.1 1563.3 470C1562.9 458.9 1559.3 446.2 1555.3 436.7C1551.3 427.1 1544.2 415.6 1539.3 412.7C1534.4 409.8 1526 414.2 1526 419.3Z" fill="#ef7d20" opacity=".45" filter="url(#b3)"/><path d="M1394 443.3C1390.2 445.6 1388.7 465.6 1388.7 476.7C1388.7 487.8 1391.6 502.7 1394 510C1396.4 517.3 1401.3 524 1403.3 520.7C1405.3 517.3 1404.7 499.6 1406 490C1407.3 480.4 1413.3 471.1 1411.3 463.3C1409.3 455.6 1397.8 441.1 1394 443.3Z" fill="#ef7d20" opacity=".4" filter="url(#b3)"/><path d="M1416.7 390C1414.9 392.2 1409.8 397.6 1406 403.3C1402.2 409.1 1397.3 417.1 1394 424.7C1390.7 432.2 1388 440.2 1386 448.7C1384 457.1 1382.4 466.9 1382 475.3C1381.6 483.8 1382.2 491.6 1383.3 499.3C1384.4 507.1 1387.8 518.2 1388.7 522" fill="none" stroke="#2a1a16" stroke-width="1.4"/><path d="M1460.7 376.7C1456.4 378.9 1442.7 384.4 1435.3 390C1428 395.6 1422 402.2 1416.7 410C1411.3 417.8 1406.9 427.8 1403.3 436.7C1399.8 445.6 1396.7 454.4 1395.3 463.3C1394 472.2 1395.3 485.6 1395.3 490" fill="none" stroke="#2a1a16" stroke-width="1.4"/><path d="M1475.3 383.3C1471.3 386.7 1458.4 396 1451.3 403.3C1444.2 410.7 1438 419.3 1432.7 427.3C1427.3 435.3 1423.3 443.1 1419.3 451.3C1415.3 459.6 1411.6 468 1408.7 476.7C1405.8 485.3 1403.2 495.8 1402 503.3C1400.8 510.9 1401.4 518.9 1401.3 522" fill="none" stroke="#2a1a16" stroke-width="1.4"/><path d="M1492 388.7C1490.1 392.2 1484.8 403.1 1480.7 410C1476.6 416.9 1472.2 423.1 1467.3 430C1462.4 436.9 1456.7 444.7 1451.3 451.3C1446 458 1439.8 464 1435.3 470C1430.9 476 1427.3 482.4 1424.7 487.3C1422 492.2 1420.2 497.3 1419.3 499.3" fill="none" stroke="#2a1a16" stroke-width="1.4"/><path d="M1508.7 394C1508.2 397.3 1507.6 407.1 1506 414C1504.4 420.9 1501.4 429.1 1499.3 435.3C1497.2 441.6 1494.3 448.7 1493.3 451.3" fill="none" stroke="#2a1a16" stroke-width="1.4"/><path d="M1519.3 388.7C1519.9 391.1 1521.8 397.7 1522.7 403.3C1523.6 409 1524.3 419.4 1524.7 422.7" fill="none" stroke="#2a1a16" stroke-width="1.4"/><path d="M1519.3 388.7C1520.4 391.1 1523.1 397.3 1526 403.3C1528.9 409.3 1533.1 416.7 1536.7 424.7C1540.2 432.7 1544.2 442.7 1547.3 451.3C1550.4 460 1553.2 468 1555.3 476.7C1557.4 485.3 1559.1 495.6 1560 503.3C1560.9 511.1 1560.6 520 1560.7 523.3" fill="none" stroke="#2a1a16" stroke-width="1.4"/><path d="M1551.3 400.7C1553.3 404.7 1560 416.2 1563.3 424.7C1566.7 433.1 1569.3 442.4 1571.3 451.3C1573.3 460.2 1574.7 469.3 1575.3 478C1576 486.7 1576 495.1 1575.3 503.3C1574.7 511.6 1572 523.3 1571.3 527.3" fill="none" stroke="#2a1a16" stroke-width="1.4"/><path d="M1403.3 399.3C1401.1 402.7 1394 411.6 1390 419.3C1386 427.1 1381.8 437.1 1379.3 446C1376.9 454.9 1375.6 463.8 1375.3 472.7C1375.1 481.6 1376.4 490.9 1378 499.3C1379.6 507.8 1383.6 519.3 1384.7 523.3" fill="none" stroke="#2a1a16" stroke-width="1.4"/><path d="M1455.3 448.7C1452.2 452.2 1442.2 462.9 1436.7 470C1431.1 477.1 1426 484.7 1422 491.3C1418 498 1414.2 506.9 1412.7 510" fill="none" stroke="#f7c7b4" stroke-width="2.0"/><path d="M1414 462C1412.7 465.6 1408 475.8 1406 483.3C1404 490.9 1402.7 503.3 1402 507.3" fill="none" stroke="#f7c7b4" stroke-width="1.6"/><path d="M1390 522.7C1391.3 527.8 1395.3 542.7 1398 553.3C1400.7 564 1403.6 575.6 1406 586.7C1408.4 597.8 1410.4 609.8 1412.7 620C1414.9 630.2 1418.2 643.3 1419.3 648" fill="none" stroke="#2a1a16" stroke-width="1.4"/><path d="M1400.7 560C1402 566.7 1406.2 588.4 1408.7 600C1411.1 611.6 1413.3 619.6 1415.3 629.3C1417.3 639.1 1419.8 653.8 1420.7 658.7" fill="none" stroke="#2a1a16" stroke-width="1.4"/><path d="M1563.3 522.7C1562.4 527.8 1560.4 542.7 1558 553.3C1555.6 564 1551.3 575.6 1548.7 586.7C1546 597.8 1544.4 609.3 1542 620C1539.6 630.7 1535.3 645.6 1534 650.7" fill="none" stroke="#2a1a16" stroke-width="1.4"/><path d="M1551.3 560C1550 566.7 1545.8 588.4 1543.3 600C1540.9 611.6 1538.7 619.6 1536.7 629.3C1534.7 639.1 1532.2 653.8 1531.3 658.7" fill="none" stroke="#2a1a16" stroke-width="1.4"/></g></svg>
<svg class="abs tx" width="1950" height="1426" viewBox="0 0 1950 1426"><defs><clipPath id="cl3"><rect x="14" y="872" width="329" height="403.5"/></clipPath></defs><g clip-path="url(#cl3)" font-size="26.67" fill="#000"><text x="15.500" y="896.400" textLength="201" lengthAdjust="spacingAndGlyphs">ビジネス_チャコール</text><text x="15.500" y="924.400" fill="#fff" textLength="160" lengthAdjust="spacingAndGlyphs">ビジネス_ピンク</text><text x="15.500" y="952.400" textLength="222" lengthAdjust="spacingAndGlyphs">ビジネス_ライトグレー</text><text x="15.500" y="980.400" textLength="267" lengthAdjust="spacingAndGlyphs">ビジネス_ハウンズトゥース</text><text x="15.500" y="1008.400" textLength="183" lengthAdjust="spacingAndGlyphs">ビジネス_ネイビー</text><text x="15.500" y="1036.400" textLength="186" lengthAdjust="spacingAndGlyphs">ビジネス_パープル</text><text x="16" y="1064.400" textLength="216" lengthAdjust="spacingAndGlyphs">フォーマル_アイボリー</text><text x="16" y="1092.400" textLength="189" lengthAdjust="spacingAndGlyphs">フォーマル_ブラック</text><text x="17.500" y="1120.400" textLength="197" lengthAdjust="spacingAndGlyphs">ユニフォーム_ピンク</text><text x="17.500" y="1148.400" textLength="219" lengthAdjust="spacingAndGlyphs">ユニフォーム_イエロー</text><text x="17.500" y="1176.400" textLength="201" lengthAdjust="spacingAndGlyphs">ユニフォーム_ブルー</text><text x="17.500" y="1204.400" textLength="195" lengthAdjust="spacingAndGlyphs">ユニフォーム_レッド</text><text x="17.500" y="1232.400" textLength="221" lengthAdjust="spacingAndGlyphs">ユニフォーム_オレンジ</text><text x="17.500" y="1260.400" textLength="210" lengthAdjust="spacingAndGlyphs">ユニフォーム_チェック</text><text x="17.500" y="1288.400" textLength="220" lengthAdjust="spacingAndGlyphs">ユニフォーム_ベージュ</text></g></svg>
<svg class="abs tx" width="1950" height="1426" viewBox="0 0 1950 1426"><text x="-5.500" y="140.500" font-size="24" fill="#000" textLength="208" lengthAdjust="spacingAndGlyphs">キャラクター作成・編集</text><g font-size="26.67" fill="#000"><text x="12.600" y="194" textLength="109" lengthAdjust="spacingAndGlyphs">対象(G) :</text><text x="16.600" y="237.200" fill="#fff">服</text><text x="16.900" y="265.200" textLength="183" lengthAdjust="spacingAndGlyphs">顔タイプと瞳の色</text><text x="16.500" y="293.200" textLength="100" lengthAdjust="spacingAndGlyphs">髪型と色</text><text x="16.500" y="321.200" textLength="124" lengthAdjust="spacingAndGlyphs">追加パーツ</text><text x="12.500" y="383.500" textLength="234" lengthAdjust="spacingAndGlyphs">追加パーツタイプ(E) :</text><text x="16.600" y="426" fill="#6d6d6d" textLength="196" lengthAdjust="spacingAndGlyphs">選択できません。</text><text x="12.600" y="854" textLength="77" lengthAdjust="spacingAndGlyphs">色(L) :</text><text x="132.500" y="850" textLength="219" lengthAdjust="spacingAndGlyphs">髪の色をそろえる(F)</text><text x="395.600" y="194" textLength="107" lengthAdjust="spacingAndGlyphs">候補(D) :</text><text x="1011.300" y="228" textLength="157" lengthAdjust="spacingAndGlyphs">プレビュー(P) :</text><text x="1185.100" y="227" textLength="145" lengthAdjust="spacingAndGlyphs">上半身:正面</text><text x="1584.200" y="228" textLength="96" lengthAdjust="spacingAndGlyphs">自動(U)</text><text x="1620.400" y="1260" textLength="109" lengthAdjust="spacingAndGlyphs">保存(V)...</text><text x="1805.600" y="1260" textLength="109" lengthAdjust="spacingAndGlyphs">閉じる(C)</text></g><g font-size="26.67" fill="#a0a0a0"><text x="646.500" y="194" textLength="218" lengthAdjust="spacingAndGlyphs">追加パーツの調整 :</text><text x="666" y="256" textLength="71" lengthAdjust="spacingAndGlyphs">位置 :</text><text x="664.300" y="576" textLength="73.500" lengthAdjust="spacingAndGlyphs">回転 :</text><text x="665" y="899.300" textLength="82" lengthAdjust="spacingAndGlyphs">サイズ :</text><text x="668.300" y="335.700" textLength="23.500" lengthAdjust="spacingAndGlyphs">X:</text><text x="668.800" y="418.900" textLength="23.500" lengthAdjust="spacingAndGlyphs">Y:</text><text x="667.400" y="501.900" textLength="24.500" lengthAdjust="spacingAndGlyphs">Z:</text><text x="668.300" y="655.700" textLength="23.500" lengthAdjust="spacingAndGlyphs">X:</text><text x="668.800" y="738.900" textLength="23.500" lengthAdjust="spacingAndGlyphs">Y:</text><text x="667.400" y="822.300" textLength="24.500" lengthAdjust="spacingAndGlyphs">Z:</text></g><g font-size="26.67" fill="#838383"><text x="798.500" y="258.500" textLength="81" lengthAdjust="spacingAndGlyphs">リセット</text><text x="798.500" y="578.500" textLength="81" lengthAdjust="spacingAndGlyphs">リセット</text><text x="798.500" y="898.500" textLength="81" lengthAdjust="spacingAndGlyphs">リセット</text><text x="1365" y="1260" textLength="188.500" lengthAdjust="spacingAndGlyphs">別名で保存(A)...</text></g><g font-size="23.5" fill="#a0a0a0"><text x="833.200" y="297.900">0</text><text x="833.200" y="381.100">0</text><text x="833.200" y="464.100">0</text><text x="833.200" y="617.900">0</text><text x="833.200" y="701.100">0</text><text x="833.200" y="784.500">0</text><text x="833.200" y="937.900">0</text></g></svg>
</body>
</html>
